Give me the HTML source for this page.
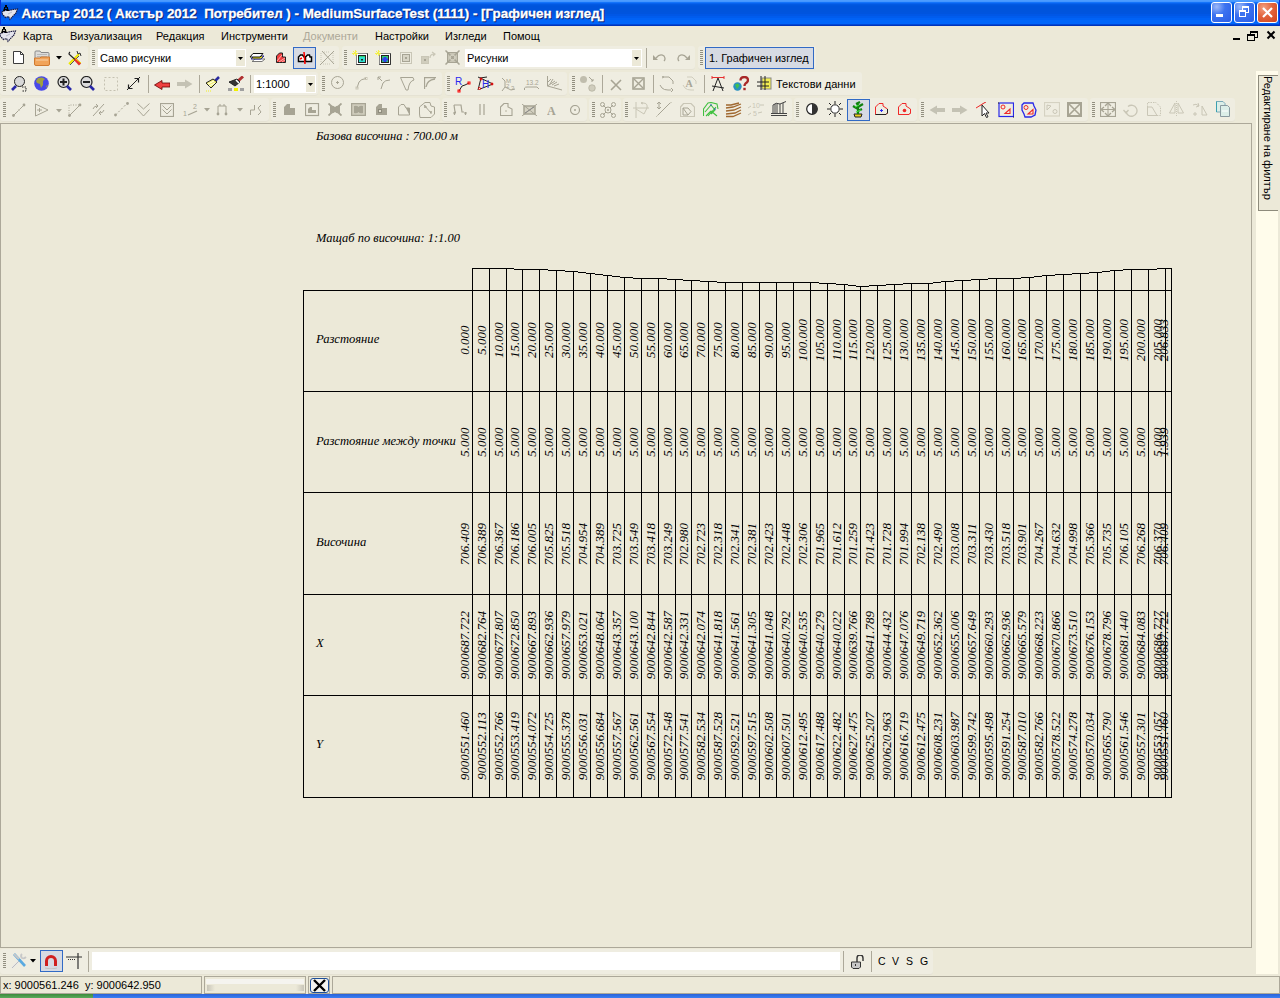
<!DOCTYPE html><html><head><meta charset="utf-8"><style>
*{box-sizing:border-box}
body{margin:0;width:1280px;height:998px;position:relative;overflow:hidden;background:#ECE9D8;font-family:"Liberation Sans",sans-serif;}
.a{position:absolute}
.t{position:absolute;white-space:nowrap;line-height:1}
.tb{position:absolute;background:#EFEDE1;border-radius:3px;box-shadow:inset 0 -1px 0 #E5E2D3}
.grip{position:absolute;width:3px;background:repeating-linear-gradient(to bottom,#928F80 0 1px,transparent 1px 2px)}
.sep{position:absolute;width:1px;background:#ACA899}
.mn{position:absolute;font-size:11px;color:#000;line-height:1}
</style></head><body>

<div class="a" style="left:0;top:0;width:1280px;height:26px;background:linear-gradient(to bottom,#4C9CFF 0px 1px,#4596FF 1px 2px,#1474FA 2px 3px,#0862EE 3px 4px,#0259E2 4px 5px,#0056DE 5px 6px,#0054DC 6px 12px,#0054DE 12px 14px,#0057E6 14px 16px,#005CEE 16px 18px,#0062F6 18px 20px,#0066FA 20px 23px,#0066FB 23px 24px,#0048D6 24px 25px,#0034BA 25px 26px)"></div>
<div class="a" style="left:0;top:0;width:1px;height:26px;background:#0831D9"></div>
<div class="a" style="left:1279px;top:0;width:1px;height:26px;background:#0831D9"></div>

<div class="t" style="left:22.5px;top:8px;font-weight:bold;font-size:13.4px;color:#0A1E6E;-webkit-text-stroke:0.3px #0A1E6E;">Акстър 2012 ( Акстър 2012&nbsp; Потребител ) - MediumSurfaceTest (1111) - [Графичен изглед]</div>
<div class="t" style="left:21.5px;top:7px;font-weight:bold;font-size:13.4px;color:#FFFFFF;-webkit-text-stroke:0.3px #FFFFFF;">Акстър 2012 ( Акстър 2012&nbsp; Потребител ) - MediumSurfaceTest (1111) - [Графичен изглед]</div>
<svg class="a" style="left:0px;top:0px" width="20" height="22" viewBox="0 0 20 22">
<path d="M2 12 L5 10.5 L9 10.5 L13 9.5 L17.5 9 L16 13 L13 16 L10 19.5 L8.5 16.5 L5.5 17.5 L2.5 14.5 Z" fill="#E4E4EC" stroke="#1A1A40" stroke-width="1.1" stroke-dasharray="1.6 0.6"/>
<path d="M8 14 L12 12" stroke="#B8B8C8"/>
<path fill-rule="evenodd" d="M5 5 H7 V7 H8 V8 L9 11 H7 V10 H5 V11 H3 L4 8 V7 H5 Z M5.2 7.8 V9 H6.8 V7.8 Z" fill="#000"/></svg>
<div class="a" style="left:1211px;top:2px;width:21px;height:21px;border:1px solid #FFFFFF;border-radius:3px;background:radial-gradient(circle at 25% 20%,#9DB9F8 0,#3C73F0 40%,#2A5DE6 100%)"></div><div class="a" style="left:1216px;top:14px;width:7px;height:3px;background:#fff"></div>
<div class="a" style="left:1234px;top:2px;width:21px;height:21px;border:1px solid #FFFFFF;border-radius:3px;background:radial-gradient(circle at 25% 20%,#9DB9F8 0,#3C73F0 40%,#2A5DE6 100%)"></div><div class="a" style="left:1242px;top:6px;width:7px;height:7px;border:1px solid #fff;border-top-width:2px"></div><div class="a" style="left:1239px;top:10px;width:7px;height:7px;border:1px solid #fff;border-top-width:2px;background:#3C73F0"></div>
<div class="a" style="left:1257px;top:2px;width:21px;height:21px;border:1px solid #FFFFFF;border-radius:3px;background:radial-gradient(circle at 30% 25%,#F4A080 0,#E2643C 45%,#D0441E 100%)"></div><svg class="a" style="left:1257px;top:2px" width="21" height="21"><path d="M6 6 L15 15 M15 6 L6 15" stroke="#fff" stroke-width="2.2"/></svg>
<svg class="a" style="left:-2px;top:22px" width="20" height="22" viewBox="0 0 20 22">
<path d="M2 12 L5 10.5 L9 10.5 L13 9.5 L17.5 9 L16 13 L13 16 L10 19.5 L8.5 16.5 L5.5 17.5 L2.5 14.5 Z" fill="#E4E4EC" stroke="#1A1A40" stroke-width="1.1" stroke-dasharray="1.6 0.6"/>
<path d="M8 14 L12 12" stroke="#B8B8C8"/>
<path fill-rule="evenodd" d="M5 5 H7 V7 H8 V8 L9 11 H7 V10 H5 V11 H3 L4 8 V7 H5 Z M5.2 7.8 V9 H6.8 V7.8 Z" fill="#000"/></svg>
<div class="mn" style="left:23px;top:31px;color:#000">Карта</div>
<div class="mn" style="left:70px;top:31px;color:#000">Визуализация</div>
<div class="mn" style="left:156px;top:31px;color:#000">Редакция</div>
<div class="mn" style="left:221px;top:31px;color:#000">Инструменти</div>
<div class="mn" style="left:303px;top:31px;color:#ACA899">Документи</div>
<div class="mn" style="left:375px;top:31px;color:#000">Настройки</div>
<div class="mn" style="left:445px;top:31px;color:#000">Изгледи</div>
<div class="mn" style="left:503px;top:31px;color:#000">Помощ</div>
<div class="a" style="left:1233px;top:38px;width:7px;height:2px;background:#000"></div>
<div class="a" style="left:1250px;top:31px;width:8px;height:7px;border:1px solid #000;border-top-width:2px"></div>
<div class="a" style="left:1247px;top:34px;width:8px;height:7px;border:1px solid #000;border-top-width:2px;background:#ECE9D8"></div>
<svg class="a" style="left:1266px;top:30px" width="10" height="10"><path d="M1.5 1.5 L8.5 8.5 M8.5 1.5 L1.5 8.5" stroke="#000" stroke-width="2"/></svg>
<div class="tb" style="left:0px;top:46px;width:88px;height:24px"></div>
<div class="grip" style="left:3px;top:50px;height:15px"></div>
<div class="tb" style="left:90px;top:46px;width:249px;height:24px"></div>
<div class="grip" style="left:92px;top:50px;height:15px"></div>
<div class="tb" style="left:342px;top:46px;width:353px;height:24px"></div>
<div class="grip" style="left:344px;top:50px;height:15px"></div>
<div class="tb" style="left:698px;top:46px;width:118px;height:24px"></div>
<div class="grip" style="left:700px;top:50px;height:15px"></div>
<div class="tb" style="left:0px;top:72px;width:318px;height:24px"></div>
<div class="grip" style="left:3px;top:76px;height:15px"></div>
<div class="tb" style="left:320px;top:72px;width:122px;height:24px"></div>
<div class="grip" style="left:322px;top:76px;height:15px"></div>
<div class="tb" style="left:445px;top:72px;width:122px;height:24px"></div>
<div class="grip" style="left:447px;top:76px;height:15px"></div>
<div class="tb" style="left:569px;top:72px;width:293px;height:24px"></div>
<div class="grip" style="left:572px;top:76px;height:15px"></div>
<div class="tb" style="left:0px;top:98px;width:269px;height:24px"></div>
<div class="grip" style="left:3px;top:102px;height:15px"></div>
<div class="tb" style="left:271px;top:98px;width:169px;height:24px"></div>
<div class="grip" style="left:273px;top:102px;height:15px"></div>
<div class="tb" style="left:442px;top:98px;width:145px;height:24px"></div>
<div class="grip" style="left:444px;top:102px;height:15px"></div>
<div class="tb" style="left:589px;top:98px;width:32px;height:24px"></div>
<div class="grip" style="left:592px;top:102px;height:15px"></div>
<div class="tb" style="left:623px;top:98px;width:169px;height:24px"></div>
<div class="grip" style="left:625px;top:102px;height:15px"></div>
<div class="tb" style="left:794px;top:98px;width:123px;height:24px"></div>
<div class="grip" style="left:796px;top:102px;height:15px"></div>
<div class="tb" style="left:919px;top:98px;width:169px;height:24px"></div>
<div class="grip" style="left:921px;top:102px;height:15px"></div>
<div class="tb" style="left:1090px;top:98px;width:145px;height:24px"></div>
<div class="grip" style="left:1092px;top:102px;height:15px"></div>
<div class="a" style="left:98px;top:49px;width:148px;height:18px;background:#fff"></div>
<div class="a" style="left:236px;top:50px;width:9px;height:16px;background:#ECE9D8"></div>
<svg class="a" style="left:238px;top:57px" width="5" height="3"><path d="M0 0 H5 L2.5 3 Z" fill="#000"/></svg>
<div class="mn" style="left:100px;top:53px">Само рисунки</div>
<div class="a" style="left:465px;top:49px;width:177px;height:18px;background:#fff"></div>
<div class="a" style="left:632px;top:50px;width:9px;height:16px;background:#ECE9D8"></div>
<svg class="a" style="left:634px;top:57px" width="5" height="3"><path d="M0 0 H5 L2.5 3 Z" fill="#000"/></svg>
<div class="mn" style="left:467px;top:53px">Рисунки</div>
<div class="sep" style="left:646px;top:48px;height:20px"></div>
<div class="a" style="left:254px;top:75px;width:62px;height:18px;background:#fff"></div>
<div class="a" style="left:306px;top:76px;width:9px;height:16px;background:#ECE9D8"></div>
<svg class="a" style="left:308px;top:83px" width="5" height="3"><path d="M0 0 H5 L2.5 3 Z" fill="#000"/></svg>
<div class="mn" style="left:256px;top:79px">1:1000</div>
<div class="sep" style="left:148px;top:75px;height:18px"></div>
<div class="sep" style="left:199px;top:75px;height:18px"></div>
<div class="sep" style="left:250px;top:75px;height:18px"></div>
<div class="sep" style="left:602px;top:75px;height:18px"></div>
<div class="sep" style="left:653px;top:75px;height:18px"></div>
<div class="sep" style="left:704px;top:75px;height:18px"></div>
<div class="a" style="left:705px;top:47px;width:109px;height:22px;background:#D6DAE3;border:1px solid #316AC5"></div>
<div class="mn" style="left:709px;top:53px">1. Графичен изглед</div>
<div class="mn" style="left:776px;top:79px">Текстови данни</div>
<div class="a" style="left:293px;top:47px;width:23px;height:22px;background:#D6DAE3;border:1px solid #316AC5"></div>
<div class="a" style="left:847px;top:99px;width:23px;height:22px;background:#D6DAE3;border:1px solid #316AC5"></div>
<div class="a" style="left:0;top:123px;width:1252px;height:825px;border-top:1px solid #ACA899;border-left:1px solid #ACA899;border-right:1px solid #ACA899;border-bottom:1px solid #ACA899"></div>
<div class="a" style="left:1256px;top:71px;width:22px;height:903px;background:#FFFCEB"></div>
<div class="a" style="left:1258px;top:75px;width:20px;height:136px;border-left:1px solid #8E8B7C;border-top:1px solid #8E8B7C;border-bottom:1px solid #8E8B7C;background:#ECE9D8"></div>
<div class="t" style="left:1273px;top:76px;font-size:11px;transform-origin:0 0;transform:rotate(90deg)">Редактиране на филтър</div>
<div class="tb" style="left:0px;top:949px;width:933px;height:26px"></div>
<div class="grip" style="left:3px;top:953px;height:15px"></div>
<div class="a" style="left:40px;top:950px;width:23px;height:22px;background:#D6DAE3;border:1px solid #316AC5"></div>
<div class="sep" style="left:88px;top:951px;height:21px"></div>
<div class="a" style="left:92px;top:952px;width:748px;height:18px;background:#fff"></div>
<div class="sep" style="left:843px;top:951px;height:21px"></div>
<div class="sep" style="left:871px;top:951px;height:21px"></div>
<div class="mn" style="left:878px;top:956px;font-size:10.5px">C</div>
<div class="mn" style="left:892px;top:956px;font-size:10.5px">V</div>
<div class="mn" style="left:906px;top:956px;font-size:10.5px">S</div>
<div class="mn" style="left:920px;top:956px;font-size:10.5px">G</div>
<div class="a" style="left:0;top:976px;width:1280px;height:18px;background:#ECE9D8"></div>
<div class="a" style="left:0px;top:976px;width:202px;height:18px;border:1px solid #ACA899;border-right-color:#ACA899"></div>
<div class="a" style="left:204px;top:976px;width:102px;height:18px;border:1px solid #ACA899;border-right-color:#ACA899"></div>
<div class="a" style="left:308px;top:976px;width:22px;height:18px;border:1px solid #ACA899;border-right-color:#ACA899"></div>
<div class="a" style="left:332px;top:976px;width:948px;height:18px;border:1px solid #ACA899;border-right-color:#ACA899"></div>
<div class="mn" style="left:3px;top:980px">x: 9000561.246&nbsp; y: 9000642.950</div>
<div class="a" style="left:206px;top:979px;width:98px;height:5px;background:#F5F4EF"></div>
<div class="a" style="left:207px;top:985px;width:8px;height:6px;background:linear-gradient(to right,#C8C5B8,#ECE9D8)"></div>
<div class="a" style="left:296px;top:985px;width:8px;height:6px;background:linear-gradient(to left,#C8C5B8,#ECE9D8)"></div>
<div class="a" style="left:310px;top:978px;width:19px;height:15px;border:1px solid #1C4E9A;border-radius:3px;background:#F4F3EE"></div>
<svg class="a" style="left:312px;top:979px" width="15" height="13"><path d="M2 1 L13 12 M13 1 L2 12" stroke="#000" stroke-width="2.4"/></svg>
<div class="a" style="left:0;top:994px;width:1280px;height:4px;background:linear-gradient(#2B62D8,#3A80F3)"></div>
<div class="a" style="left:0;top:994px;width:93px;height:4px;background:linear-gradient(#3C8A3C,#5BAA5B)"></div>
<svg class="a" style="left:12px;top:50px" width="13" height="15" viewBox="0 0 13 15"><path d="M1.5 1.5 H8.5 L11.5 4.5 V13.5 H1.5 Z" fill="#fff" stroke="#3C3C3C"/><path d="M8.5 1.5 V4.5 H11.5" fill="none" stroke="#3C3C3C"/></svg>
<svg class="a" style="left:34px;top:50px" width="16" height="16" viewBox="0 0 16 16"><path d="M1 2 Q1 1 2 1 H6 L7 2.5 H14 Q15 2.5 15 3.5 V9 H1 Z" fill="#DCDCDA" stroke="#8A8A8A"/><path d="M3 4.5 H13 M3 6.5 H13" stroke="#B8B8B8"/><path d="M0.5 8 H6 L7 7 H15.5 V14 Q15.5 15.5 14 15.5 H2 Q0.5 15.5 0.5 14 Z" fill="#F1A45A" stroke="#D07A30"/><path d="M2 10 H14" stroke="#F8D2A8"/></svg>
<svg class="a" style="left:56px;top:56px" width="6" height="4" viewBox="0 0 6 4"><path d="M0 0 H6 L3 3.5 Z" fill="#000"/></svg>
<svg class="a" style="left:67px;top:50px" width="16" height="16" viewBox="0 0 16 16"><path d="M2 14 L12 4" stroke="#EEE800" stroke-width="2"/><path d="M3 15 L12 6" stroke="#555" stroke-width="1"/><path d="M3 2 Q1 4 3 5 L13 14" stroke="#222" fill="none" stroke-width="1.2"/><path d="M8 9 L13 14.5" stroke="#E8302A" stroke-width="3"/><path d="M9 9 L14 13" stroke="#F0E000" stroke-width="1"/><path d="M10 1 L11 4 L13 3 L14 6" stroke="#333" fill="none"/></svg>
<svg class="a" style="left:249px;top:52px" width="17" height="11" viewBox="0 0 17 11"><path d="M3 9.5 L13 9.5 L16 7 L6 7 Z" fill="#fff" stroke="#777"/><path d="M2 7 L12 7 L15 4 L5 4 Z" fill="#E8E000" stroke="#2020A0"/><path d="M1 5 L11 5 L14 1.5 L4 1.5 Z" fill="#fff" stroke="#111"/></svg>
<svg class="a" style="left:275px;top:52px" width="12" height="12" viewBox="0 0 12 12"><path d="M1.5 4 L4.5 1 H7.5 V5 H10.5 V10.5 H1.5 Z" fill="#F04040" stroke="#222"/><path d="M2 9 L7 3 M4 10 L10 6 M7 10 L10 8" stroke="#FFB0B0"/></svg>
<svg class="a" style="left:297px;top:51px" width="16" height="13" viewBox="0 0 16 13"><path d="M1.5 10.5 V6 L3.5 4 H5.5 L7 6 H8 V10.5 Z" fill="#fff" stroke="#000" stroke-width="1.5"/><path d="M3 8 L5 7" stroke="#f00" stroke-width="1.5"/><path d="M8.5 10.5 V6 L10.5 4 H12.5 L13 6 H14.5 V10.5 Z" fill="#fff" stroke="#000" stroke-width="1.5"/><path d="M7 1 L8 13" stroke="#f00" stroke-width="1.5"/></svg>
<svg class="a" style="left:319px;top:50px" width="16" height="16" viewBox="0 0 16 16"><path d="M1 15 L15 1 M3 1 L15 14" stroke="#A7A494"/><path d="M2 3 V13 M14 3 V13 M4 14 H12 M5 2 H11" stroke="#C9C6B6" stroke-dasharray="1 1"/></svg>
<svg class="a" style="left:352px;top:50px" width="16" height="16" viewBox="0 0 16 16"><rect x="4.5" y="3.5" width="11" height="11" fill="#fff" stroke="#888"/><path d="M15.5 3.5 V14.5 H4.5" fill="none" stroke="#333"/><rect x="6.5" y="5.5" width="7" height="7" fill="#30D070" stroke="#222"/><rect x="7" y="7" width="6" height="5" fill="#30E0D0"/><rect x="9" y="9" width="2" height="1.5" fill="#222"/><path d="M1 1 L5 5 M3.5 0 V6 M0 3.5 H6 M5 1 L1 5" stroke="#F4F040" stroke-width="0.9"/></svg>
<svg class="a" style="left:375px;top:50px" width="16" height="16" viewBox="0 0 16 16"><rect x="4.5" y="3.5" width="11" height="11" fill="#fff" stroke="#888"/><path d="M15.5 3.5 V14.5 H4.5" fill="none" stroke="#333"/><rect x="6.5" y="5.5" width="7" height="7" fill="#30D070" stroke="#222"/><rect x="7" y="7" width="6" height="5" fill="#3040F0"/><path d="M7 7 h1.5 v1.5 h-1.5z M11.5 7 h1.5 v1.5 h-1.5z M7 10.5 h1.5 v1.5 h-1.5z M11.5 10.5 h1.5 v1.5 h-1.5z" fill="#30D070"/><path d="M1 1 L5 5 M3.5 0 V6 M0 3.5 H6 M5 1 L1 5" stroke="#F4F040" stroke-width="0.9"/></svg>
<svg class="a" style="left:400px;top:52px" width="12" height="12" viewBox="0 0 12 12"><rect x="0.5" y="0.5" width="11" height="11" fill="none" stroke="#C9C6B6"/><rect x="2.5" y="2.5" width="7" height="7" fill="#D8D5C6" stroke="#A7A494"/><rect x="5" y="5" width="2" height="2" fill="#A7A494"/></svg>
<svg class="a" style="left:421px;top:51px" width="16" height="14" viewBox="0 0 16 14"><rect x="0.5" y="5.5" width="7" height="7" fill="#D0CDBD" stroke="#C9C6B6"/><rect x="3" y="8" width="2" height="2" fill="#A7A494"/><path d="M9 7 Q9 3 13 3 M11 1 L14 3 L12 5" stroke="#C9C6B6" fill="none" stroke-width="1.2"/></svg>
<svg class="a" style="left:445px;top:50px" width="15" height="15" viewBox="0 0 15 15"><rect x="2.5" y="2.5" width="10" height="10" fill="#C8C5B5" stroke="#A7A494"/><path d="M0.5 0.5 L14.5 14.5 M14.5 0.5 L0.5 14.5" stroke="#A7A494" stroke-width="1.5"/><circle cx="7.5" cy="7.5" r="2.5" fill="none" stroke="#D8D5C6"/></svg>
<svg class="a" style="left:653px;top:53px" width="14" height="9" viewBox="0 0 14 9"><g ><path d="M3 5 Q7 0 11 3 Q13 6 11 8" fill="none" stroke="#A7A494" stroke-width="1.3"/><path d="M0 2 L0 7 L5 7 Z" fill="#A7A494"/></g></svg>
<svg class="a" style="left:676px;top:53px" width="14" height="9" viewBox="0 0 14 9"><g transform="translate(14,0) scale(-1,1)"><path d="M3 5 Q7 0 11 3 Q13 6 11 8" fill="none" stroke="#A7A494" stroke-width="1.3"/><path d="M0 2 L0 7 L5 7 Z" fill="#A7A494"/></g></svg>
<svg class="a" style="left:11px;top:76px" width="16" height="16" viewBox="0 0 16 16"><circle cx="8.5" cy="5.5" r="5" fill="#D8D8D8" stroke="#222"/><path d="M5 10 L1 14" stroke="#2828A8" stroke-width="2.6"/><path d="M11 11 H15 V15 H11" fill="none" stroke="#222" stroke-dasharray="1.5 1"/></svg>
<svg class="a" style="left:34px;top:76px" width="15" height="15" viewBox="0 0 15 15"><circle cx="7.5" cy="7.5" r="7.3" fill="#4848E8"/><path d="M4 2 L8 1.5 L11 3 L9 5 L9 9 L7 12 L6 8 L3 7 L2 5 Z M12 10 L14 9 L13 12 Z" fill="#A0A040"/></svg>
<svg class="a" style="left:57px;top:76px" width="16" height="16" viewBox="0 0 16 16"><circle cx="6.5" cy="6" r="5.5" fill="#DCDCDC" stroke="#222" stroke-width="1.2"/><path d="M3 6 H10 M6.5 2.5 V9.5" stroke="#222" stroke-width="2"/><path d="M10 10 L14 14" stroke="#2828A8" stroke-width="2.6"/></svg>
<svg class="a" style="left:80px;top:76px" width="16" height="16" viewBox="0 0 16 16"><circle cx="6.5" cy="6" r="5.5" fill="#DCDCDC" stroke="#222" stroke-width="1.2"/><path d="M3 6 H10" stroke="#222" stroke-width="2"/><path d="M10 10 L14 14" stroke="#2828A8" stroke-width="2.6"/></svg>
<svg class="a" style="left:104px;top:77px" width="14" height="14" viewBox="0 0 14 14"><rect x="0.5" y="0.5" width="13" height="13" fill="none" stroke="#C4C1B1" stroke-dasharray="2 2"/></svg>
<svg class="a" style="left:126px;top:76px" width="15" height="15" viewBox="0 0 15 15"><path d="M1 14 L14 1" stroke="#222"/><path d="M8.5 2.5 L12.5 2.5 L12.5 6.5 M2.5 8.5 V12.5 H6.5" fill="none" stroke="#222" stroke-width="1.2"/></svg>
<svg class="a" style="left:154px;top:80px" width="16" height="10" viewBox="0 0 16 10"><path d="M0.5 5 L8 0.5 V3 H16 V7 H8 V9.5 Z" fill="#F04040" stroke="#600" stroke-width="0.8"/></svg>
<svg class="a" style="left:177px;top:79px" width="16" height="10" viewBox="0 0 16 10"><path d="M15.5 5 L8 0.5 V3 H0 V7 H8 V9.5 Z" fill="#C4C2B4"/></svg>
<svg class="a" style="left:205px;top:76px" width="16" height="16" viewBox="0 0 16 16"><path d="M10 5 L14 1" stroke="#2A2AA0" stroke-width="2.5"/><path d="M1 7 L8 3 L12 6 L6 12 Z" fill="#F2F070" stroke="#222"/><path d="M3 8 L9 5 M4 10 L10 7" stroke="#fff"/><path d="M1 15 H6" stroke="#F0F020" stroke-dasharray="1 1"/></svg>
<svg class="a" style="left:228px;top:76px" width="16" height="16" viewBox="0 0 16 16"><path d="M10 5 L15 0.5" stroke="#B03030" stroke-width="3"/><path d="M1 6 L9 3 L12 6 L7 10 Z" fill="#333" stroke="#222"/><path d="M8 4 L11 7" stroke="#fff" stroke-width="1.5"/><rect x="0" y="12" width="4" height="3" fill="#A0A0A0"/><rect x="6" y="12" width="4" height="3" fill="#F0F000"/><rect x="12" y="12" width="4" height="3" fill="#A0A0A0"/></svg>
<svg class="a" style="left:331px;top:76px" width="13" height="13" viewBox="0 0 13 13"><circle cx="6.5" cy="6.5" r="6" fill="none" stroke="#A7A494"/><path d="M6.5 5 V8 M5 6.5 H8" stroke="#A7A494"/></svg>
<svg class="a" style="left:355px;top:77px" width="13" height="13" viewBox="0 0 13 13"><path d="M2 11 L4 5 Q6 2 11 1.5" fill="none" stroke="#A7A494"/><rect x="1" y="10" width="2" height="2" fill="none" stroke="#C9C6B6"/><rect x="10" y="0.5" width="2" height="2" fill="none" stroke="#C9C6B6"/></svg>
<svg class="a" style="left:377px;top:76px" width="15" height="14" viewBox="0 0 15 14"><path d="M4 13 L6 7 Q8 4 13 4" fill="none" stroke="#A7A494"/><path d="M1 1 L5 5 M1 1 V4 M1 1 H4" stroke="#A7A494"/></svg>
<svg class="a" style="left:400px;top:77px" width="15" height="14" viewBox="0 0 15 14"><path d="M0.5 0.5 H13 L14 3 Q9 4 8 13 L6 13 Z" fill="none" stroke="#A7A494"/></svg>
<svg class="a" style="left:424px;top:77px" width="13" height="13" viewBox="0 0 13 13"><path d="M0.5 12 V0.5 H12 M2 10 Q3 3 11 2" fill="none" stroke="#A7A494" stroke-width="1.3"/></svg>
<svg class="a" style="left:455px;top:77px" width="16" height="16" viewBox="0 0 16 16"><text x="0" y="8" font-family="Liberation Sans" font-size="10" fill="#2828F0">R</text><path d="M4 14 L7 9 L10 8 L14 6" fill="none" stroke="#222"/><rect x="3" y="13" width="2" height="2" fill="none" stroke="#f00"/><rect x="13" y="5" width="2" height="2" fill="none" stroke="#f00"/></svg>
<svg class="a" style="left:477px;top:76px" width="17" height="16" viewBox="0 0 17 16"><path d="M4 2 L1 14 M1 1 L16 8 L3 13 M3 2 L10 1" fill="none" stroke="#222"/><text x="5" y="12" font-family="Liberation Sans" font-size="10" fill="#2828F0">H</text><circle cx="4" cy="3" r="1" fill="none" stroke="#f00"/><circle cx="2.5" cy="12.5" r="1" fill="none" stroke="#f00"/><circle cx="15" cy="8" r="1" fill="none" stroke="#f00"/></svg>
<svg class="a" style="left:501px;top:77px" width="16" height="15" viewBox="0 0 16 15"><path d="M1 1 L4 4 V10 L1 14 M4 10 L10 13 L14 12" fill="none" stroke="#A7A494"/><text x="5" y="6" font-family="Liberation Sans" font-size="6" fill="#A7A494">M</text><text x="5" y="11" font-family="Liberation Sans" font-size="6" fill="#A7A494">2</text><text x="10" y="13" font-family="Liberation Sans" font-size="6" fill="#A7A494">3</text></svg>
<svg class="a" style="left:524px;top:79px" width="16" height="12" viewBox="0 0 16 12"><text x="2" y="6" font-family="Liberation Sans" font-size="6.5" fill="#A7A494">13.2</text><path d="M0.5 11 V9 Q1 8 3 8 H13 L15 10" fill="none" stroke="#A7A494"/></svg>
<svg class="a" style="left:547px;top:76px" width="16" height="15" viewBox="0 0 16 15"><path d="M0.5 0 V10 L15 14 M0.5 10 L8 5 M3 8 L6 3 M5 9 L10 6 M7 10 L12 8 M1 6 L4 3" fill="none" stroke="#A7A494"/></svg>
<svg class="a" style="left:580px;top:76px" width="16" height="16" viewBox="0 0 16 16"><circle cx="3.5" cy="3.5" r="3.5" fill="#C0BDAD"/><circle cx="12" cy="12" r="3.3" fill="#D0CDBD" stroke="#A7A494" stroke-width="0.6"/><path d="M9 1 L13 5 M11 5 H13 V3" stroke="#A7A494" fill="none"/></svg>
<svg class="a" style="left:610px;top:79px" width="12" height="12" viewBox="0 0 12 12"><path d="M1 1 L11 11 M11 1 L1 11" stroke="#A7A494" stroke-width="1.6"/></svg>
<svg class="a" style="left:632px;top:77px" width="13" height="13" viewBox="0 0 13 13"><rect x="1" y="1" width="11" height="11" fill="none" stroke="#A7A494" stroke-width="1.6"/><path d="M2 2 L11 11 M11 2 L2 11" stroke="#A7A494" stroke-width="1.4"/></svg>
<svg class="a" style="left:659px;top:76px" width="16" height="16" viewBox="0 0 16 16"><path d="M5 1 H10 L14 5 V8 M1 9 L3 12 Q5 14 9 14 H12 M12 12 L14 14 L12 16 M3 0 L5 1 L3 2" fill="none" stroke="#A7A494"/></svg>
<svg class="a" style="left:682px;top:76px" width="16" height="16" viewBox="0 0 16 16"><path d="M5 1 H10 L14 5 V8 M1 9 L3 12 Q5 14 9 14 H12" fill="none" stroke="#D0CDBD"/><text x="3.5" y="11" font-family="Liberation Serif" font-weight="bold" font-size="10" fill="#A7A494">A</text></svg>
<svg class="a" style="left:711px;top:76px" width="14" height="16" viewBox="0 0 14 16"><path d="M1 1.5 H13 M1 0 V3 M13 0 V3" stroke="#E83030"/><path d="M7 2 L2 15 M7 2 L12 15 M1 10 L13 12" fill="none" stroke="#222"/></svg>
<svg class="a" style="left:733px;top:76px" width="16" height="15" viewBox="0 0 16 15"><circle cx="4.5" cy="10.5" r="4.2" fill="#2890C0"/><path d="M2 8.5 L5 7.5 L6.5 9.5 L4 13 Z" fill="#40C050"/><path d="M7.5 4.5 Q7.5 1 11.5 1 Q15 1 15 4 Q15 6 12.5 7.5 Q11.5 8.5 11.5 10" fill="none" stroke="#A82828" stroke-width="2.3"/><rect x="10.3" y="11.8" width="2.4" height="2.4" fill="#A82828"/></svg>
<svg class="a" style="left:757px;top:76px" width="15" height="15" viewBox="0 0 15 15"><rect x="5" y="2" width="9" height="11" fill="#F2EE50" stroke="#888"/><path d="M0 6 H12 M0 10 H12 M4 0 V14 M8 0 V14" stroke="#222"/></svg>
<svg class="a" style="left:12px;top:103px" width="14" height="14" viewBox="0 0 14 14"><path d="M1.5 12.5 L12.5 1.5" stroke="#A7A494"/><circle cx="1.5" cy="12.5" r="1.4" fill="#A7A494"/><circle cx="12" cy="2" r="1.4" fill="#A7A494"/><circle cx="7" cy="7" r="1" fill="#C9C6B6"/></svg>
<svg class="a" style="left:35px;top:103px" width="14" height="14" viewBox="0 0 14 14"><path d="M0.5 1 L13 7 L0.5 13 Z M2 7 H7 M4.5 5 V9" fill="none" stroke="#A7A494"/></svg>
<svg class="a" style="left:56px;top:109px" width="6" height="4" viewBox="0 0 6 4"><path d="M0 0 H6 L3 3.5 Z" fill="#A7A494"/></svg>
<svg class="a" style="left:68px;top:103px" width="14" height="14" viewBox="0 0 14 14"><path d="M1 13 L13 1" stroke="#A7A494"/><path d="M1 13 V2 H13" stroke="#A7A494" stroke-dasharray="1 1.5" fill="none"/><circle cx="1.5" cy="12.5" r="1.4" fill="#A7A494"/><circle cx="12" cy="2" r="1.4" fill="#A7A494"/></svg>
<svg class="a" style="left:92px;top:103px" width="13" height="14" viewBox="0 0 13 14"><path d="M1 13 L12 1" stroke="#A7A494"/><path d="M1 6 Q2 3 5 3 M4 1 L6 3 L4 5 M12 7 Q11 10 8 10 M9 8 L7 10 L9 12" fill="none" stroke="#A7A494"/></svg>
<svg class="a" style="left:114px;top:102px" width="15" height="15" viewBox="0 0 15 15"><path d="M1.5 13 L13 1.5" stroke="#A7A494" stroke-dasharray="2 2"/><circle cx="1.5" cy="13" r="1.4" fill="#A7A494"/><circle cx="13.5" cy="1.5" r="1.4" fill="#A7A494"/></svg>
<svg class="a" style="left:137px;top:103px" width="13" height="14" viewBox="0 0 13 14"><path d="M0.5 0.5 L6.5 6 L12.5 0.5 M0.5 6.5 L6.5 13 L12.5 6.5" fill="none" stroke="#A7A494"/></svg>
<svg class="a" style="left:160px;top:103px" width="14" height="14" viewBox="0 0 14 14"><rect x="0.5" y="0.5" width="13" height="13" fill="none" stroke="#A7A494" stroke-width="1.2"/><path d="M2.5 2.5 L7 7 L11.5 2.5 M2.5 6.5 L7 11 L11.5 6.5" fill="none" stroke="#A7A494"/></svg>
<svg class="a" style="left:183px;top:103px" width="15" height="14" viewBox="0 0 15 14"><text x="0" y="13" font-family="Liberation Sans" font-size="7" fill="#A7A494">1</text><text x="10" y="6" font-family="Liberation Sans" font-size="7" fill="#A7A494">2</text><path d="M5 12 L14 8" stroke="#A7A494" stroke-width="1.2"/></svg>
<svg class="a" style="left:204px;top:108px" width="6" height="4" viewBox="0 0 6 4"><path d="M0 0 H6 L3 3.5 Z" fill="#A7A494"/></svg>
<svg class="a" style="left:216px;top:104px" width="13" height="12" viewBox="0 0 13 12"><path d="M2 10 V2 H10 V10 M4 2 V0 M8 2 V0" fill="none" stroke="#A7A494"/><circle cx="2" cy="10" r="1.4" fill="#A7A494"/><circle cx="10" cy="10" r="1.4" fill="#A7A494"/></svg>
<svg class="a" style="left:237px;top:108px" width="6" height="4" viewBox="0 0 6 4"><path d="M0 0 H6 L3 3.5 Z" fill="#A7A494"/></svg>
<svg class="a" style="left:250px;top:105px" width="13" height="11" viewBox="0 0 13 11"><path d="M0.5 10 V5 H4.5 V0 M11 0 L8 3 L11 7 L8 10" fill="none" stroke="#A7A494"/></svg>
<svg class="a" style="left:284px;top:104px" width="12" height="12" viewBox="0 0 12 12"><path d="M0 3 L3 0 H6 V4 H11 V11 H0 Z" fill="#A7A494"/></svg>
<svg class="a" style="left:305px;top:103px" width="15" height="14" viewBox="0 0 15 14"><rect x="0.5" y="0.5" width="13" height="12" fill="none" stroke="#A7A494" stroke-width="1.2"/><path d="M3 6 L5 4 H7 V7 H11 V10 H3 Z" fill="#A7A494"/></svg>
<svg class="a" style="left:328px;top:103px" width="14" height="13" viewBox="0 0 14 13"><path d="M2 3 Q5 2 7 4 Q9 2 12 3 V10 Q9 11 7 9 Q5 11 2 10 Z" fill="#A7A494"/><path d="M0.5 0.5 L13.5 12.5 M13.5 0.5 L0.5 12.5" stroke="#A7A494" stroke-width="1.8"/></svg>
<svg class="a" style="left:351px;top:103px" width="15" height="13" viewBox="0 0 15 13"><rect x="0.5" y="0.5" width="14" height="12" fill="#D0CDBD" stroke="#A7A494" stroke-width="1.5"/><path d="M3 3 Q6 2 7.5 4 Q9 2 12 3 V10 Q9 11 7.5 9 Q6 11 3 10 Z" fill="#A7A494"/></svg>
<svg class="a" style="left:376px;top:104px" width="12" height="12" viewBox="0 0 12 12"><path d="M0 3 L3 0 H6 V4 H11 V11 H0 Z" fill="#A7A494"/><rect x="2.5" y="5.5" width="3" height="3" fill="#E0DDCD" stroke="#8E8B7C"/></svg>
<svg class="a" style="left:398px;top:104px" width="12" height="12" viewBox="0 0 12 12"><path d="M0.5 3 L3 0.5 H6 L8 4 H11.5 V11 H0.5 Z" fill="none" stroke="#A7A494"/><path d="M6 0.5 L11.5 11 V4 H8 Z" fill="#A7A494"/></svg>
<svg class="a" style="left:419px;top:102px" width="16" height="16" viewBox="0 0 16 16"><path d="M0.5 5 L6 0.5 H11 L12 4 L15.5 5 V12 L12 15.5 H1 L0.5 12 Z" fill="none" stroke="#A7A494"/><path d="M5 3 L12 11 M5 5 H8 M6 3 V6 M11 10 H13 M12 9 V12" stroke="#A7A494"/></svg>
<svg class="a" style="left:453px;top:104px" width="15" height="12" viewBox="0 0 15 12"><path d="M1 1 H8 L9 8 H11 M1 1 L2 8 H3 M0 9 H3 M1.5 8 V11 M11 9 H14 M12.5 8 V11" fill="none" stroke="#A7A494" stroke-width="1.2"/></svg>
<svg class="a" style="left:479px;top:104px" width="6" height="11" viewBox="0 0 6 11"><path d="M1 0 V11 M5 0 V11" stroke="#A7A494" stroke-width="1.2"/></svg>
<svg class="a" style="left:500px;top:103px" width="13" height="13" viewBox="0 0 13 13"><path d="M0.5 4 L4 0.5 H8 V4 L12 6 V12.5 H0.5 Z" fill="none" stroke="#A7A494" stroke-width="1.1"/><path d="M5 8 H7 M6 7 V9" stroke="#C9C6B6"/></svg>
<svg class="a" style="left:522px;top:104px" width="15" height="12" viewBox="0 0 15 12"><rect x="2" y="2" width="11" height="8" fill="#D5D2C2" stroke="#A7A494" stroke-width="1.5"/><path d="M0 0 L15 12 M15 0 L0 12" stroke="#A7A494"/><path d="M3 9 L12 3" stroke="#888"/></svg>
<svg class="a" style="left:547px;top:105px" width="10" height="10" viewBox="0 0 10 10"><text x="0" y="9.5" font-family="Liberation Serif" font-weight="bold" font-size="12" fill="#A7A494">A</text></svg>
<svg class="a" style="left:570px;top:105px" width="10" height="10" viewBox="0 0 10 10"><circle cx="5" cy="5" r="4.5" fill="none" stroke="#A7A494" stroke-width="1.2"/><circle cx="5" cy="5" r="1" fill="#A7A494"/></svg>
<svg class="a" style="left:600px;top:102px" width="16" height="16" viewBox="0 0 16 16"><circle cx="8" cy="8" r="3" fill="none" stroke="#A7A494"/><path d="M3 3 L6 6 M13 3 L10 6 M3 13 L6 10 M13 13 L10 10 M7 8 H9 M8 7 V9" stroke="#A7A494"/><circle cx="2.5" cy="2.5" r="2" fill="none" stroke="#A7A494"/><circle cx="13.5" cy="2.5" r="2" fill="none" stroke="#A7A494"/><circle cx="2.5" cy="13.5" r="2" fill="none" stroke="#A7A494"/><circle cx="13.5" cy="13.5" r="2" fill="none" stroke="#A7A494"/></svg>
<svg class="a" style="left:633px;top:102px" width="16" height="16" viewBox="0 0 16 16"><path d="M3 0 V16 M0 6 H16 M3 7 L11 12 L14 6 Q15 1 10 1 H8 M8 1 L10 0 M8 1 L10 2" fill="none" stroke="#C9C6B6"/></svg>
<svg class="a" style="left:656px;top:102px" width="16" height="15" viewBox="0 0 16 15"><path d="M3 0 V7 M1 2 L3 0 L5 2 M1 5 L3 7 L5 5 M2 13 L14 1" fill="none" stroke="#A7A494"/><path d="M2 13 L0 15 M14 1 L16 0" stroke="#C9C6B6"/></svg>
<svg class="a" style="left:680px;top:103px" width="15" height="14" viewBox="0 0 15 14"><path d="M0.5 4 L3.5 0.5 H11 L14.5 4 V13.5 H0.5 Z" fill="none" stroke="#C9C6B6" stroke-width="1.2"/><path d="M3 5 H8 L11 8.5 L8 12 H3 Z M3 5 L8 12" fill="none" stroke="#A7A494"/></svg>
<svg class="a" style="left:703px;top:102px" width="16" height="15" viewBox="0 0 16 15"><path d="M0.5 14 V7 L5 1 L8 0.5 L14 2 L15 7 M2 10 L8 3 L12 8 L8 12 M5 14 L13 5 M8 9 L14 14 M3 14 L8 9" fill="none" stroke="#40C040" stroke-width="1.1"/><circle cx="8" cy="3" r="0.8" fill="#2850C8"/><circle cx="12" cy="7" r="0.8" fill="#2850C8"/></svg>
<svg class="a" style="left:725px;top:102px" width="17" height="16" viewBox="0 0 17 16"><path d="M1 3 H6 L14 1 M1 6 L8 5 L16 2 M1 9 L9 8 L16 5 M1 12 L10 11 L16 8 M1 14.5 H8 L16 11" fill="none" stroke="#A06830" stroke-width="1.3"/></svg>
<svg class="a" style="left:748px;top:102px" width="16" height="15" viewBox="0 0 16 15"><text x="4" y="6" font-family="Liberation Sans" font-size="7" fill="#C9C6B6">10</text><text x="5" y="14" font-family="Liberation Sans" font-size="7" fill="#C9C6B6">5</text><path d="M0 6 L3 4 M12 3 H16 M0 13 L3 11 M10 11 L14 10" stroke="#C9C6B6"/></svg>
<svg class="a" style="left:771px;top:101px" width="16" height="16" viewBox="0 0 16 16"><path d="M0 12.5 H16 M0 14.5 H16" stroke="#444"/><path d="M2 12 V4 Q5 1 9 3 L15 0.5 M4 12 V3 M6 12 V2.5 M9 12 V3 M12 12 V2" fill="none" stroke="#444"/></svg>
<svg class="a" style="left:806px;top:103px" width="12" height="12" viewBox="0 0 12 12"><circle cx="6" cy="6" r="5.3" fill="#fff" stroke="#222" stroke-width="1.2"/><path d="M6 0.7 A5.3 5.3 0 0 1 6 11.3 Z" fill="#333"/></svg>
<svg class="a" style="left:827px;top:101px" width="16" height="16" viewBox="0 0 16 16"><circle cx="8" cy="8" r="4.2" fill="#fff" stroke="#222"/><path d="M8 0 V3 M8 13 V16 M0 8 H3 M13 8 H16 M2 2 L4 4 M12 12 L14 14 M14 2 L12 4 M2 14 L4 12" stroke="#222"/></svg>
<svg class="a" style="left:850px;top:101px" width="16" height="17" viewBox="0 0 16 17"><path d="M4 13 H12 L11 16 H5 Z" fill="#E8D020" stroke="#222"/><path d="M8 13 V3 M8 8 L3 5 M8 6 L13 3 M8 10 L12 8 M6 3 L10 1" stroke="#108010" stroke-width="2.2"/><path d="M5 6 L9 4 M6 11 L11 9" stroke="#40E040" stroke-width="1.2"/></svg>
<svg class="a" style="left:875px;top:103px" width="13" height="13" viewBox="0 0 13 13"><path d="M0.5 11.5 V4 L4 0.5 H8 V3 L12.5 6 V10 L11 11.5 Z" fill="none" stroke="#F02828"/><path d="M0.5 11.5 H11 L12.5 10 V6" fill="none" stroke="#222"/><path d="M5 7.5 H8 M6.5 6 V9" stroke="#2828F0"/></svg>
<svg class="a" style="left:898px;top:103px" width="13" height="13" viewBox="0 0 13 13"><path d="M0.5 11.5 V4 L4 0.5 H8 V3 L12.5 6 V10 L11 11.5 Z" fill="none" stroke="#F02828"/><path d="M0.5 11.5 H11 L12.5 10 V6" fill="none" stroke="#F02828"/><circle cx="6.5" cy="7.5" r="1.8" fill="#F02828"/></svg>
<svg class="a" style="left:929px;top:105px" width="16" height="10" viewBox="0 0 16 10"><path d="M0.5 5 L8 0.5 V3 H16 V7 H8 V9.5 Z" fill="#C4C2B4" /></svg>
<svg class="a" style="left:952px;top:105px" width="16" height="10" viewBox="0 0 16 10"><path d="M15.5 5 L8 0.5 V3 H0 V7 H8 V9.5 Z" fill="#C4C2B4"/></svg>
<svg class="a" style="left:976px;top:102px" width="14" height="16" viewBox="0 0 14 16"><path d="M0 6 L8 1 L10 0" stroke="#F02828"/><path d="M6 3 V14 L8.5 11.5 L10.5 15.5 L12 14.8 L10 11 H13 Z" fill="#fff" stroke="#222"/></svg>
<svg class="a" style="left:998px;top:102px" width="16" height="16" viewBox="0 0 16 16"><rect x="1" y="1" width="14.5" height="13.5" fill="none" stroke="#2828E8" stroke-width="1.2"/><path d="M0 0 V2 M16 14 V16" stroke="#222"/><circle cx="5" cy="5" r="2" fill="none" stroke="#F02828"/><path d="M7 11.5 H12 V7 Z" fill="none" stroke="#F02828" stroke-width="1.1"/></svg>
<svg class="a" style="left:1021px;top:102px" width="16" height="16" viewBox="0 0 16 16"><path d="M1 3 L3 1 H12 L13 4 L15 8 L14 13 L10 15 H4 L3 12 L1 8 Z" fill="none" stroke="#2828E8" stroke-width="1.3"/><circle cx="5" cy="5.5" r="2" fill="none" stroke="#F02828"/><path d="M7 12 H12 V7.5 Z" fill="none" stroke="#F02828" stroke-width="1.1"/></svg>
<svg class="a" style="left:1044px;top:102px" width="16" height="15" viewBox="0 0 16 15"><rect x="0.5" y="0.5" width="15" height="13.5" fill="none" stroke="#D5D2C2" stroke-width="1.2"/><path d="M3 3 V8 L7 4 Z" fill="none" stroke="#C9C6B6"/><circle cx="11" cy="9.5" r="2" fill="none" stroke="#C9C6B6"/></svg>
<svg class="a" style="left:1067px;top:102px" width="15" height="15" viewBox="0 0 15 15"><rect x="1" y="1" width="13" height="13" fill="none" stroke="#A7A494" stroke-width="2"/><path d="M1.5 1.5 L13.5 13.5 M13.5 1.5 L1.5 13.5" stroke="#A7A494" stroke-width="1.6"/></svg>
<svg class="a" style="left:1100px;top:102px" width="16" height="15" viewBox="0 0 16 15"><rect x="0.5" y="0.5" width="15" height="14" fill="none" stroke="#A7A494" stroke-width="1.2"/><path d="M8 2 V13 M2 7.5 H14" stroke="#A7A494"/><path d="M5 4 L8 1 L11 4 M5 11 L8 14 L11 11 M4 5 L1 7.5 L4 10 M12 5 L15 7.5 L12 10" fill="none" stroke="#A7A494" stroke-width="1.3"/></svg>
<svg class="a" style="left:1123px;top:103px" width="15" height="14" viewBox="0 0 15 14"><path d="M3 8 A5.5 5.5 0 1 0 5 3.5" fill="none" stroke="#C9C6B6" stroke-width="1.3"/><path d="M0.5 7 L3 10 L5.5 7" fill="none" stroke="#C9C6B6" stroke-width="1.3"/></svg>
<svg class="a" style="left:1147px;top:102px" width="14" height="14" viewBox="0 0 14 14"><path d="M0.5 13.5 V5 H5 L10 13.5 Z" fill="none" stroke="#C9C6B6"/><path d="M0.5 5 V0.5 H9 L13.5 5 V13.5 H10" fill="none" stroke="#C9C6B6" stroke-dasharray="1.5 1"/></svg>
<svg class="a" style="left:1169px;top:101px" width="15" height="16" viewBox="0 0 15 16"><path d="M6 2 L0.5 12 H6 Z M9 2 L14.5 12 H9 Z" fill="none" stroke="#C9C6B6"/><path d="M7.5 0 V16" stroke="#C9C6B6" stroke-dasharray="1 1"/></svg>
<svg class="a" style="left:1192px;top:102px" width="16" height="15" viewBox="0 0 16 15"><path d="M1 3 Q4 1 7 4 M6 1 L7 4 L4 5 M10 4 V13 H15 Z M1 12 H5 M3 10 V14" fill="none" stroke="#C9C6B6"/></svg>
<svg class="a" style="left:1216px;top:101px" width="14" height="16" viewBox="0 0 14 16"><path d="M0.5 0.5 H7 L9 2.5 V11 H0.5 Z" fill="#DCEEE8" stroke="#7AAAB8"/><path d="M4.5 4.5 H11.5 L13.5 6.5 V15.5 H4.5 Z" fill="#DCEEE8" stroke="#8A9AA0"/><path d="M6 10 H12" stroke="#fff"/><path d="M0.5 0.5 V11" stroke="#3AA0B0"/></svg>
<svg class="a" style="left:11px;top:953px" width="16" height="16" viewBox="0 0 16 16"><path d="M1 15 L10 6" stroke="#E8E8E8" stroke-width="2"/><path d="M1 15 L10 6" stroke="#A0A0A0" stroke-width="0.6"/><path d="M3 1 L14 13" stroke="#5AAAE0" stroke-width="2.6"/><path d="M3 1 L8 6" stroke="#C8C8C8" stroke-width="2"/><path d="M11 1 Q9 3 11 5 Q13 6 15 4" fill="none" stroke="#C8C8C8" stroke-width="1.8"/></svg>
<svg class="a" style="left:30px;top:959px" width="6" height="4" viewBox="0 0 6 4"><path d="M0 0 H6 L3 3.5 Z" fill="#000"/></svg>
<svg class="a" style="left:44px;top:954px" width="14" height="15" viewBox="0 0 14 15"><path d="M2.5 12 V7 A4.5 4.5 0 0 1 11.5 7 V12" fill="none" stroke="#D02020" stroke-width="3"/><path d="M1 14 Q7 16 13 14" fill="none" stroke="#C0C0C0"/></svg>
<svg class="a" style="left:66px;top:953px" width="17" height="17" viewBox="0 0 17 17"><path d="M0 4 H16 M12 0 V16" stroke="#333" stroke-width="1.2"/><path d="M2 6.5 H9" stroke="#333" stroke-dasharray="1 1"/></svg>
<svg class="a" style="left:851px;top:955px" width="14" height="14" viewBox="0 0 14 14"><path d="M0.5 7 H9.5 V12 L8 13.5 H2 L0.5 12 Z" fill="#C8C8C8" stroke="#333"/><path d="M6 7 V3 A3 3 0 0 1 12 3 V6" fill="none" stroke="#333" stroke-width="1.4"/><path d="M4.5 9 V11" stroke="#333"/></svg>
<svg class="a" style="left:0;top:0" width="1280" height="998" shape-rendering="crispEdges">
<path fill="#000" d="M303 290h869v1h-869zM303 290h1v508h-1zM303 391h869v1h-869zM303 492h869v1h-869zM303 594h869v1h-869zM303 695h869v1h-869zM303 797h869v1h-869zM472 268h1v530h-1zM489 268h1v530h-1zM506 268h1v530h-1zM522 269h1v529h-1zM539 269h1v529h-1zM556 270h1v528h-1zM573 271h1v527h-1zM590 273h1v525h-1zM607 275h1v523h-1zM624 277h1v521h-1zM641 278h1v520h-1zM658 278h1v520h-1zM675 279h1v519h-1zM691 280h1v518h-1zM708 281h1v517h-1zM725 282h1v516h-1zM742 282h1v516h-1zM759 282h1v516h-1zM776 282h1v516h-1zM793 282h1v516h-1zM810 282h1v516h-1zM827 283h1v515h-1zM844 284h1v514h-1zM860 286h1v512h-1zM877 285h1v513h-1zM894 284h1v514h-1zM911 283h1v515h-1zM928 283h1v515h-1zM945 281h1v517h-1zM962 280h1v518h-1zM979 279h1v519h-1zM996 278h1v520h-1zM1013 278h1v520h-1zM1029 277h1v521h-1zM1046 275h1v523h-1zM1063 274h1v524h-1zM1080 273h1v525h-1zM1097 272h1v526h-1zM1114 270h1v528h-1zM1131 269h1v529h-1zM1148 269h1v529h-1zM1165 268h1v530h-1zM1171 268h1v530h-1zM595 274h8v1h-8zM1055 274h17v1h-17zM819 283h17v1h-17zM903 283h30v1h-30zM472 268h42v1h-42zM1157 268h15v1h-15zM620 277h13v1h-13zM1021 277h13v1h-13zM514 269h34v1h-34zM1123 269h34v1h-34zM612 276h8v1h-8zM1034 276h8v1h-8zM667 279h16v1h-16zM971 279h17v1h-17zM700 281h17v1h-17zM941 281h13v1h-13zM717 282h102v1h-102zM933 282h8v1h-8zM565 271h13v1h-13zM1102 271h8v1h-8zM683 280h17v1h-17zM954 280h17v1h-17zM836 284h12v1h-12zM886 284h17v1h-17zM633 278h34v1h-34zM988 278h33v1h-33zM548 270h17v1h-17zM1110 270h13v1h-13zM603 275h9v1h-9zM1042 275h13v1h-13zM848 285h8v1h-8zM869 285h17v1h-17zM578 272h8v1h-8zM1089 272h13v1h-13zM856 286h13v1h-13zM586 273h9v1h-9zM1072 273h17v1h-17z"/>
</svg>
<div class="t" style="left:316px;top:330.5px;font:italic 13.1px 'Liberation Serif';transform-origin:0 0;transform:scaleX(0.965)">Разстояние</div>
<div class="t" style="left:316px;top:432.5px;font:italic 13.1px 'Liberation Serif';transform-origin:0 0;transform:scaleX(0.965)">Разстояние между точки</div>
<div class="t" style="left:316px;top:533.5px;font:italic 13.1px 'Liberation Serif';transform-origin:0 0;transform:scaleX(0.965)">Височина</div>
<div class="t" style="left:316px;top:634.5px;font:italic 13.1px 'Liberation Serif';transform-origin:0 0;transform:scaleX(0.965)">X</div>
<div class="t" style="left:316px;top:735.5px;font:italic 13.1px 'Liberation Serif';transform-origin:0 0;transform:scaleX(0.965)">Y</div>
<div class="t" style="left:316px;top:128px;font:italic 13.1px 'Liberation Serif';transform-origin:0 0;transform:scaleX(0.95)">Базова височина : 700.00 м</div>
<div class="t" style="left:316px;top:230px;font:italic 13.1px 'Liberation Serif';transform-origin:0 0;transform:scaleX(0.95)">Мащаб по височина: 1:1.00</div>
<div class="t lb" style="left:471px;top:339.5px;"><span style="position:absolute;right:0;top:0;transform-origin:100% 0;transform:rotate(-90deg) translate(50%,-100%);font:italic 13px 'Liberation Serif';line-height:1">0.000</span></div>
<div class="t lb" style="left:471px;top:441.5px;"><span style="position:absolute;right:0;top:0;transform-origin:100% 0;transform:rotate(-90deg) translate(50%,-100%);font:italic 13px 'Liberation Serif';line-height:1">5.000</span></div>
<div class="t lb" style="left:471px;top:544.0px;"><span style="position:absolute;right:0;top:0;transform-origin:100% 0;transform:rotate(-90deg) translate(50%,-100%);font:italic 13px 'Liberation Serif';line-height:1">706.409</span></div>
<div class="t lb" style="left:471px;top:644.5px;"><span style="position:absolute;right:0;top:0;transform-origin:100% 0;transform:rotate(-90deg) translate(50%,-100%);font:italic 13px 'Liberation Serif';line-height:1">9000687.722</span></div>
<div class="t lb" style="left:471px;top:746.0px;"><span style="position:absolute;right:0;top:0;transform-origin:100% 0;transform:rotate(-90deg) translate(50%,-100%);font:italic 13px 'Liberation Serif';line-height:1">9000551.460</span></div>
<div class="t lb" style="left:488px;top:339.5px;"><span style="position:absolute;right:0;top:0;transform-origin:100% 0;transform:rotate(-90deg) translate(50%,-100%);font:italic 13px 'Liberation Serif';line-height:1">5.000</span></div>
<div class="t lb" style="left:488px;top:441.5px;"><span style="position:absolute;right:0;top:0;transform-origin:100% 0;transform:rotate(-90deg) translate(50%,-100%);font:italic 13px 'Liberation Serif';line-height:1">5.000</span></div>
<div class="t lb" style="left:488px;top:544.0px;"><span style="position:absolute;right:0;top:0;transform-origin:100% 0;transform:rotate(-90deg) translate(50%,-100%);font:italic 13px 'Liberation Serif';line-height:1">706.389</span></div>
<div class="t lb" style="left:488px;top:644.5px;"><span style="position:absolute;right:0;top:0;transform-origin:100% 0;transform:rotate(-90deg) translate(50%,-100%);font:italic 13px 'Liberation Serif';line-height:1">9000682.764</span></div>
<div class="t lb" style="left:488px;top:746.0px;"><span style="position:absolute;right:0;top:0;transform-origin:100% 0;transform:rotate(-90deg) translate(50%,-100%);font:italic 13px 'Liberation Serif';line-height:1">9000552.113</span></div>
<div class="t lb" style="left:505px;top:339.5px;"><span style="position:absolute;right:0;top:0;transform-origin:100% 0;transform:rotate(-90deg) translate(50%,-100%);font:italic 13px 'Liberation Serif';line-height:1">10.000</span></div>
<div class="t lb" style="left:505px;top:441.5px;"><span style="position:absolute;right:0;top:0;transform-origin:100% 0;transform:rotate(-90deg) translate(50%,-100%);font:italic 13px 'Liberation Serif';line-height:1">5.000</span></div>
<div class="t lb" style="left:505px;top:544.0px;"><span style="position:absolute;right:0;top:0;transform-origin:100% 0;transform:rotate(-90deg) translate(50%,-100%);font:italic 13px 'Liberation Serif';line-height:1">706.367</span></div>
<div class="t lb" style="left:505px;top:644.5px;"><span style="position:absolute;right:0;top:0;transform-origin:100% 0;transform:rotate(-90deg) translate(50%,-100%);font:italic 13px 'Liberation Serif';line-height:1">9000677.807</span></div>
<div class="t lb" style="left:505px;top:746.0px;"><span style="position:absolute;right:0;top:0;transform-origin:100% 0;transform:rotate(-90deg) translate(50%,-100%);font:italic 13px 'Liberation Serif';line-height:1">9000552.766</span></div>
<div class="t lb" style="left:521px;top:339.5px;"><span style="position:absolute;right:0;top:0;transform-origin:100% 0;transform:rotate(-90deg) translate(50%,-100%);font:italic 13px 'Liberation Serif';line-height:1">15.000</span></div>
<div class="t lb" style="left:521px;top:441.5px;"><span style="position:absolute;right:0;top:0;transform-origin:100% 0;transform:rotate(-90deg) translate(50%,-100%);font:italic 13px 'Liberation Serif';line-height:1">5.000</span></div>
<div class="t lb" style="left:521px;top:544.0px;"><span style="position:absolute;right:0;top:0;transform-origin:100% 0;transform:rotate(-90deg) translate(50%,-100%);font:italic 13px 'Liberation Serif';line-height:1">706.186</span></div>
<div class="t lb" style="left:521px;top:644.5px;"><span style="position:absolute;right:0;top:0;transform-origin:100% 0;transform:rotate(-90deg) translate(50%,-100%);font:italic 13px 'Liberation Serif';line-height:1">9000672.850</span></div>
<div class="t lb" style="left:521px;top:746.0px;"><span style="position:absolute;right:0;top:0;transform-origin:100% 0;transform:rotate(-90deg) translate(50%,-100%);font:italic 13px 'Liberation Serif';line-height:1">9000553.419</span></div>
<div class="t lb" style="left:538px;top:339.5px;"><span style="position:absolute;right:0;top:0;transform-origin:100% 0;transform:rotate(-90deg) translate(50%,-100%);font:italic 13px 'Liberation Serif';line-height:1">20.000</span></div>
<div class="t lb" style="left:538px;top:441.5px;"><span style="position:absolute;right:0;top:0;transform-origin:100% 0;transform:rotate(-90deg) translate(50%,-100%);font:italic 13px 'Liberation Serif';line-height:1">5.000</span></div>
<div class="t lb" style="left:538px;top:544.0px;"><span style="position:absolute;right:0;top:0;transform-origin:100% 0;transform:rotate(-90deg) translate(50%,-100%);font:italic 13px 'Liberation Serif';line-height:1">706.005</span></div>
<div class="t lb" style="left:538px;top:644.5px;"><span style="position:absolute;right:0;top:0;transform-origin:100% 0;transform:rotate(-90deg) translate(50%,-100%);font:italic 13px 'Liberation Serif';line-height:1">9000667.893</span></div>
<div class="t lb" style="left:538px;top:746.0px;"><span style="position:absolute;right:0;top:0;transform-origin:100% 0;transform:rotate(-90deg) translate(50%,-100%);font:italic 13px 'Liberation Serif';line-height:1">9000554.072</span></div>
<div class="t lb" style="left:555px;top:339.5px;"><span style="position:absolute;right:0;top:0;transform-origin:100% 0;transform:rotate(-90deg) translate(50%,-100%);font:italic 13px 'Liberation Serif';line-height:1">25.000</span></div>
<div class="t lb" style="left:555px;top:441.5px;"><span style="position:absolute;right:0;top:0;transform-origin:100% 0;transform:rotate(-90deg) translate(50%,-100%);font:italic 13px 'Liberation Serif';line-height:1">5.000</span></div>
<div class="t lb" style="left:555px;top:544.0px;"><span style="position:absolute;right:0;top:0;transform-origin:100% 0;transform:rotate(-90deg) translate(50%,-100%);font:italic 13px 'Liberation Serif';line-height:1">705.825</span></div>
<div class="t lb" style="left:555px;top:644.5px;"><span style="position:absolute;right:0;top:0;transform-origin:100% 0;transform:rotate(-90deg) translate(50%,-100%);font:italic 13px 'Liberation Serif';line-height:1">9000662.936</span></div>
<div class="t lb" style="left:555px;top:746.0px;"><span style="position:absolute;right:0;top:0;transform-origin:100% 0;transform:rotate(-90deg) translate(50%,-100%);font:italic 13px 'Liberation Serif';line-height:1">9000554.725</span></div>
<div class="t lb" style="left:572px;top:339.5px;"><span style="position:absolute;right:0;top:0;transform-origin:100% 0;transform:rotate(-90deg) translate(50%,-100%);font:italic 13px 'Liberation Serif';line-height:1">30.000</span></div>
<div class="t lb" style="left:572px;top:441.5px;"><span style="position:absolute;right:0;top:0;transform-origin:100% 0;transform:rotate(-90deg) translate(50%,-100%);font:italic 13px 'Liberation Serif';line-height:1">5.000</span></div>
<div class="t lb" style="left:572px;top:544.0px;"><span style="position:absolute;right:0;top:0;transform-origin:100% 0;transform:rotate(-90deg) translate(50%,-100%);font:italic 13px 'Liberation Serif';line-height:1">705.518</span></div>
<div class="t lb" style="left:572px;top:644.5px;"><span style="position:absolute;right:0;top:0;transform-origin:100% 0;transform:rotate(-90deg) translate(50%,-100%);font:italic 13px 'Liberation Serif';line-height:1">9000657.979</span></div>
<div class="t lb" style="left:572px;top:746.0px;"><span style="position:absolute;right:0;top:0;transform-origin:100% 0;transform:rotate(-90deg) translate(50%,-100%);font:italic 13px 'Liberation Serif';line-height:1">9000555.378</span></div>
<div class="t lb" style="left:589px;top:339.5px;"><span style="position:absolute;right:0;top:0;transform-origin:100% 0;transform:rotate(-90deg) translate(50%,-100%);font:italic 13px 'Liberation Serif';line-height:1">35.000</span></div>
<div class="t lb" style="left:589px;top:441.5px;"><span style="position:absolute;right:0;top:0;transform-origin:100% 0;transform:rotate(-90deg) translate(50%,-100%);font:italic 13px 'Liberation Serif';line-height:1">5.000</span></div>
<div class="t lb" style="left:589px;top:544.0px;"><span style="position:absolute;right:0;top:0;transform-origin:100% 0;transform:rotate(-90deg) translate(50%,-100%);font:italic 13px 'Liberation Serif';line-height:1">704.954</span></div>
<div class="t lb" style="left:589px;top:644.5px;"><span style="position:absolute;right:0;top:0;transform-origin:100% 0;transform:rotate(-90deg) translate(50%,-100%);font:italic 13px 'Liberation Serif';line-height:1">9000653.021</span></div>
<div class="t lb" style="left:589px;top:746.0px;"><span style="position:absolute;right:0;top:0;transform-origin:100% 0;transform:rotate(-90deg) translate(50%,-100%);font:italic 13px 'Liberation Serif';line-height:1">9000556.031</span></div>
<div class="t lb" style="left:606px;top:339.5px;"><span style="position:absolute;right:0;top:0;transform-origin:100% 0;transform:rotate(-90deg) translate(50%,-100%);font:italic 13px 'Liberation Serif';line-height:1">40.000</span></div>
<div class="t lb" style="left:606px;top:441.5px;"><span style="position:absolute;right:0;top:0;transform-origin:100% 0;transform:rotate(-90deg) translate(50%,-100%);font:italic 13px 'Liberation Serif';line-height:1">5.000</span></div>
<div class="t lb" style="left:606px;top:544.0px;"><span style="position:absolute;right:0;top:0;transform-origin:100% 0;transform:rotate(-90deg) translate(50%,-100%);font:italic 13px 'Liberation Serif';line-height:1">704.389</span></div>
<div class="t lb" style="left:606px;top:644.5px;"><span style="position:absolute;right:0;top:0;transform-origin:100% 0;transform:rotate(-90deg) translate(50%,-100%);font:italic 13px 'Liberation Serif';line-height:1">9000648.064</span></div>
<div class="t lb" style="left:606px;top:746.0px;"><span style="position:absolute;right:0;top:0;transform-origin:100% 0;transform:rotate(-90deg) translate(50%,-100%);font:italic 13px 'Liberation Serif';line-height:1">9000556.684</span></div>
<div class="t lb" style="left:623px;top:339.5px;"><span style="position:absolute;right:0;top:0;transform-origin:100% 0;transform:rotate(-90deg) translate(50%,-100%);font:italic 13px 'Liberation Serif';line-height:1">45.000</span></div>
<div class="t lb" style="left:623px;top:441.5px;"><span style="position:absolute;right:0;top:0;transform-origin:100% 0;transform:rotate(-90deg) translate(50%,-100%);font:italic 13px 'Liberation Serif';line-height:1">5.000</span></div>
<div class="t lb" style="left:623px;top:544.0px;"><span style="position:absolute;right:0;top:0;transform-origin:100% 0;transform:rotate(-90deg) translate(50%,-100%);font:italic 13px 'Liberation Serif';line-height:1">703.725</span></div>
<div class="t lb" style="left:623px;top:644.5px;"><span style="position:absolute;right:0;top:0;transform-origin:100% 0;transform:rotate(-90deg) translate(50%,-100%);font:italic 13px 'Liberation Serif';line-height:1">9000643.357</span></div>
<div class="t lb" style="left:623px;top:746.0px;"><span style="position:absolute;right:0;top:0;transform-origin:100% 0;transform:rotate(-90deg) translate(50%,-100%);font:italic 13px 'Liberation Serif';line-height:1">9000557.567</span></div>
<div class="t lb" style="left:640px;top:339.5px;"><span style="position:absolute;right:0;top:0;transform-origin:100% 0;transform:rotate(-90deg) translate(50%,-100%);font:italic 13px 'Liberation Serif';line-height:1">50.000</span></div>
<div class="t lb" style="left:640px;top:441.5px;"><span style="position:absolute;right:0;top:0;transform-origin:100% 0;transform:rotate(-90deg) translate(50%,-100%);font:italic 13px 'Liberation Serif';line-height:1">5.000</span></div>
<div class="t lb" style="left:640px;top:544.0px;"><span style="position:absolute;right:0;top:0;transform-origin:100% 0;transform:rotate(-90deg) translate(50%,-100%);font:italic 13px 'Liberation Serif';line-height:1">703.549</span></div>
<div class="t lb" style="left:640px;top:644.5px;"><span style="position:absolute;right:0;top:0;transform-origin:100% 0;transform:rotate(-90deg) translate(50%,-100%);font:italic 13px 'Liberation Serif';line-height:1">9000643.100</span></div>
<div class="t lb" style="left:640px;top:746.0px;"><span style="position:absolute;right:0;top:0;transform-origin:100% 0;transform:rotate(-90deg) translate(50%,-100%);font:italic 13px 'Liberation Serif';line-height:1">9000562.561</span></div>
<div class="t lb" style="left:657px;top:339.5px;"><span style="position:absolute;right:0;top:0;transform-origin:100% 0;transform:rotate(-90deg) translate(50%,-100%);font:italic 13px 'Liberation Serif';line-height:1">55.000</span></div>
<div class="t lb" style="left:657px;top:441.5px;"><span style="position:absolute;right:0;top:0;transform-origin:100% 0;transform:rotate(-90deg) translate(50%,-100%);font:italic 13px 'Liberation Serif';line-height:1">5.000</span></div>
<div class="t lb" style="left:657px;top:544.0px;"><span style="position:absolute;right:0;top:0;transform-origin:100% 0;transform:rotate(-90deg) translate(50%,-100%);font:italic 13px 'Liberation Serif';line-height:1">703.418</span></div>
<div class="t lb" style="left:657px;top:644.5px;"><span style="position:absolute;right:0;top:0;transform-origin:100% 0;transform:rotate(-90deg) translate(50%,-100%);font:italic 13px 'Liberation Serif';line-height:1">9000642.844</span></div>
<div class="t lb" style="left:657px;top:746.0px;"><span style="position:absolute;right:0;top:0;transform-origin:100% 0;transform:rotate(-90deg) translate(50%,-100%);font:italic 13px 'Liberation Serif';line-height:1">9000567.554</span></div>
<div class="t lb" style="left:674px;top:339.5px;"><span style="position:absolute;right:0;top:0;transform-origin:100% 0;transform:rotate(-90deg) translate(50%,-100%);font:italic 13px 'Liberation Serif';line-height:1">60.000</span></div>
<div class="t lb" style="left:674px;top:441.5px;"><span style="position:absolute;right:0;top:0;transform-origin:100% 0;transform:rotate(-90deg) translate(50%,-100%);font:italic 13px 'Liberation Serif';line-height:1">5.000</span></div>
<div class="t lb" style="left:674px;top:544.0px;"><span style="position:absolute;right:0;top:0;transform-origin:100% 0;transform:rotate(-90deg) translate(50%,-100%);font:italic 13px 'Liberation Serif';line-height:1">703.249</span></div>
<div class="t lb" style="left:674px;top:644.5px;"><span style="position:absolute;right:0;top:0;transform-origin:100% 0;transform:rotate(-90deg) translate(50%,-100%);font:italic 13px 'Liberation Serif';line-height:1">9000642.587</span></div>
<div class="t lb" style="left:674px;top:746.0px;"><span style="position:absolute;right:0;top:0;transform-origin:100% 0;transform:rotate(-90deg) translate(50%,-100%);font:italic 13px 'Liberation Serif';line-height:1">9000572.548</span></div>
<div class="t lb" style="left:690px;top:339.5px;"><span style="position:absolute;right:0;top:0;transform-origin:100% 0;transform:rotate(-90deg) translate(50%,-100%);font:italic 13px 'Liberation Serif';line-height:1">65.000</span></div>
<div class="t lb" style="left:690px;top:441.5px;"><span style="position:absolute;right:0;top:0;transform-origin:100% 0;transform:rotate(-90deg) translate(50%,-100%);font:italic 13px 'Liberation Serif';line-height:1">5.000</span></div>
<div class="t lb" style="left:690px;top:544.0px;"><span style="position:absolute;right:0;top:0;transform-origin:100% 0;transform:rotate(-90deg) translate(50%,-100%);font:italic 13px 'Liberation Serif';line-height:1">702.980</span></div>
<div class="t lb" style="left:690px;top:644.5px;"><span style="position:absolute;right:0;top:0;transform-origin:100% 0;transform:rotate(-90deg) translate(50%,-100%);font:italic 13px 'Liberation Serif';line-height:1">9000642.331</span></div>
<div class="t lb" style="left:690px;top:746.0px;"><span style="position:absolute;right:0;top:0;transform-origin:100% 0;transform:rotate(-90deg) translate(50%,-100%);font:italic 13px 'Liberation Serif';line-height:1">9000577.541</span></div>
<div class="t lb" style="left:707px;top:339.5px;"><span style="position:absolute;right:0;top:0;transform-origin:100% 0;transform:rotate(-90deg) translate(50%,-100%);font:italic 13px 'Liberation Serif';line-height:1">70.000</span></div>
<div class="t lb" style="left:707px;top:441.5px;"><span style="position:absolute;right:0;top:0;transform-origin:100% 0;transform:rotate(-90deg) translate(50%,-100%);font:italic 13px 'Liberation Serif';line-height:1">5.000</span></div>
<div class="t lb" style="left:707px;top:544.0px;"><span style="position:absolute;right:0;top:0;transform-origin:100% 0;transform:rotate(-90deg) translate(50%,-100%);font:italic 13px 'Liberation Serif';line-height:1">702.723</span></div>
<div class="t lb" style="left:707px;top:644.5px;"><span style="position:absolute;right:0;top:0;transform-origin:100% 0;transform:rotate(-90deg) translate(50%,-100%);font:italic 13px 'Liberation Serif';line-height:1">9000642.074</span></div>
<div class="t lb" style="left:707px;top:746.0px;"><span style="position:absolute;right:0;top:0;transform-origin:100% 0;transform:rotate(-90deg) translate(50%,-100%);font:italic 13px 'Liberation Serif';line-height:1">9000582.534</span></div>
<div class="t lb" style="left:724px;top:339.5px;"><span style="position:absolute;right:0;top:0;transform-origin:100% 0;transform:rotate(-90deg) translate(50%,-100%);font:italic 13px 'Liberation Serif';line-height:1">75.000</span></div>
<div class="t lb" style="left:724px;top:441.5px;"><span style="position:absolute;right:0;top:0;transform-origin:100% 0;transform:rotate(-90deg) translate(50%,-100%);font:italic 13px 'Liberation Serif';line-height:1">5.000</span></div>
<div class="t lb" style="left:724px;top:544.0px;"><span style="position:absolute;right:0;top:0;transform-origin:100% 0;transform:rotate(-90deg) translate(50%,-100%);font:italic 13px 'Liberation Serif';line-height:1">702.318</span></div>
<div class="t lb" style="left:724px;top:644.5px;"><span style="position:absolute;right:0;top:0;transform-origin:100% 0;transform:rotate(-90deg) translate(50%,-100%);font:italic 13px 'Liberation Serif';line-height:1">9000641.818</span></div>
<div class="t lb" style="left:724px;top:746.0px;"><span style="position:absolute;right:0;top:0;transform-origin:100% 0;transform:rotate(-90deg) translate(50%,-100%);font:italic 13px 'Liberation Serif';line-height:1">9000587.528</span></div>
<div class="t lb" style="left:741px;top:339.5px;"><span style="position:absolute;right:0;top:0;transform-origin:100% 0;transform:rotate(-90deg) translate(50%,-100%);font:italic 13px 'Liberation Serif';line-height:1">80.000</span></div>
<div class="t lb" style="left:741px;top:441.5px;"><span style="position:absolute;right:0;top:0;transform-origin:100% 0;transform:rotate(-90deg) translate(50%,-100%);font:italic 13px 'Liberation Serif';line-height:1">5.000</span></div>
<div class="t lb" style="left:741px;top:544.0px;"><span style="position:absolute;right:0;top:0;transform-origin:100% 0;transform:rotate(-90deg) translate(50%,-100%);font:italic 13px 'Liberation Serif';line-height:1">702.341</span></div>
<div class="t lb" style="left:741px;top:644.5px;"><span style="position:absolute;right:0;top:0;transform-origin:100% 0;transform:rotate(-90deg) translate(50%,-100%);font:italic 13px 'Liberation Serif';line-height:1">9000641.561</span></div>
<div class="t lb" style="left:741px;top:746.0px;"><span style="position:absolute;right:0;top:0;transform-origin:100% 0;transform:rotate(-90deg) translate(50%,-100%);font:italic 13px 'Liberation Serif';line-height:1">9000592.521</span></div>
<div class="t lb" style="left:758px;top:339.5px;"><span style="position:absolute;right:0;top:0;transform-origin:100% 0;transform:rotate(-90deg) translate(50%,-100%);font:italic 13px 'Liberation Serif';line-height:1">85.000</span></div>
<div class="t lb" style="left:758px;top:441.5px;"><span style="position:absolute;right:0;top:0;transform-origin:100% 0;transform:rotate(-90deg) translate(50%,-100%);font:italic 13px 'Liberation Serif';line-height:1">5.000</span></div>
<div class="t lb" style="left:758px;top:544.0px;"><span style="position:absolute;right:0;top:0;transform-origin:100% 0;transform:rotate(-90deg) translate(50%,-100%);font:italic 13px 'Liberation Serif';line-height:1">702.381</span></div>
<div class="t lb" style="left:758px;top:644.5px;"><span style="position:absolute;right:0;top:0;transform-origin:100% 0;transform:rotate(-90deg) translate(50%,-100%);font:italic 13px 'Liberation Serif';line-height:1">9000641.305</span></div>
<div class="t lb" style="left:758px;top:746.0px;"><span style="position:absolute;right:0;top:0;transform-origin:100% 0;transform:rotate(-90deg) translate(50%,-100%);font:italic 13px 'Liberation Serif';line-height:1">9000597.515</span></div>
<div class="t lb" style="left:775px;top:339.5px;"><span style="position:absolute;right:0;top:0;transform-origin:100% 0;transform:rotate(-90deg) translate(50%,-100%);font:italic 13px 'Liberation Serif';line-height:1">90.000</span></div>
<div class="t lb" style="left:775px;top:441.5px;"><span style="position:absolute;right:0;top:0;transform-origin:100% 0;transform:rotate(-90deg) translate(50%,-100%);font:italic 13px 'Liberation Serif';line-height:1">5.000</span></div>
<div class="t lb" style="left:775px;top:544.0px;"><span style="position:absolute;right:0;top:0;transform-origin:100% 0;transform:rotate(-90deg) translate(50%,-100%);font:italic 13px 'Liberation Serif';line-height:1">702.423</span></div>
<div class="t lb" style="left:775px;top:644.5px;"><span style="position:absolute;right:0;top:0;transform-origin:100% 0;transform:rotate(-90deg) translate(50%,-100%);font:italic 13px 'Liberation Serif';line-height:1">9000641.048</span></div>
<div class="t lb" style="left:775px;top:746.0px;"><span style="position:absolute;right:0;top:0;transform-origin:100% 0;transform:rotate(-90deg) translate(50%,-100%);font:italic 13px 'Liberation Serif';line-height:1">9000602.508</span></div>
<div class="t lb" style="left:792px;top:339.5px;"><span style="position:absolute;right:0;top:0;transform-origin:100% 0;transform:rotate(-90deg) translate(50%,-100%);font:italic 13px 'Liberation Serif';line-height:1">95.000</span></div>
<div class="t lb" style="left:792px;top:441.5px;"><span style="position:absolute;right:0;top:0;transform-origin:100% 0;transform:rotate(-90deg) translate(50%,-100%);font:italic 13px 'Liberation Serif';line-height:1">5.000</span></div>
<div class="t lb" style="left:792px;top:544.0px;"><span style="position:absolute;right:0;top:0;transform-origin:100% 0;transform:rotate(-90deg) translate(50%,-100%);font:italic 13px 'Liberation Serif';line-height:1">702.448</span></div>
<div class="t lb" style="left:792px;top:644.5px;"><span style="position:absolute;right:0;top:0;transform-origin:100% 0;transform:rotate(-90deg) translate(50%,-100%);font:italic 13px 'Liberation Serif';line-height:1">9000640.792</span></div>
<div class="t lb" style="left:792px;top:746.0px;"><span style="position:absolute;right:0;top:0;transform-origin:100% 0;transform:rotate(-90deg) translate(50%,-100%);font:italic 13px 'Liberation Serif';line-height:1">9000607.501</span></div>
<div class="t lb" style="left:809px;top:339.5px;"><span style="position:absolute;right:0;top:0;transform-origin:100% 0;transform:rotate(-90deg) translate(50%,-100%);font:italic 13px 'Liberation Serif';line-height:1">100.000</span></div>
<div class="t lb" style="left:809px;top:441.5px;"><span style="position:absolute;right:0;top:0;transform-origin:100% 0;transform:rotate(-90deg) translate(50%,-100%);font:italic 13px 'Liberation Serif';line-height:1">5.000</span></div>
<div class="t lb" style="left:809px;top:544.0px;"><span style="position:absolute;right:0;top:0;transform-origin:100% 0;transform:rotate(-90deg) translate(50%,-100%);font:italic 13px 'Liberation Serif';line-height:1">702.306</span></div>
<div class="t lb" style="left:809px;top:644.5px;"><span style="position:absolute;right:0;top:0;transform-origin:100% 0;transform:rotate(-90deg) translate(50%,-100%);font:italic 13px 'Liberation Serif';line-height:1">9000640.535</span></div>
<div class="t lb" style="left:809px;top:746.0px;"><span style="position:absolute;right:0;top:0;transform-origin:100% 0;transform:rotate(-90deg) translate(50%,-100%);font:italic 13px 'Liberation Serif';line-height:1">9000612.495</span></div>
<div class="t lb" style="left:826px;top:339.5px;"><span style="position:absolute;right:0;top:0;transform-origin:100% 0;transform:rotate(-90deg) translate(50%,-100%);font:italic 13px 'Liberation Serif';line-height:1">105.000</span></div>
<div class="t lb" style="left:826px;top:441.5px;"><span style="position:absolute;right:0;top:0;transform-origin:100% 0;transform:rotate(-90deg) translate(50%,-100%);font:italic 13px 'Liberation Serif';line-height:1">5.000</span></div>
<div class="t lb" style="left:826px;top:544.0px;"><span style="position:absolute;right:0;top:0;transform-origin:100% 0;transform:rotate(-90deg) translate(50%,-100%);font:italic 13px 'Liberation Serif';line-height:1">701.965</span></div>
<div class="t lb" style="left:826px;top:644.5px;"><span style="position:absolute;right:0;top:0;transform-origin:100% 0;transform:rotate(-90deg) translate(50%,-100%);font:italic 13px 'Liberation Serif';line-height:1">9000640.279</span></div>
<div class="t lb" style="left:826px;top:746.0px;"><span style="position:absolute;right:0;top:0;transform-origin:100% 0;transform:rotate(-90deg) translate(50%,-100%);font:italic 13px 'Liberation Serif';line-height:1">9000617.488</span></div>
<div class="t lb" style="left:843px;top:339.5px;"><span style="position:absolute;right:0;top:0;transform-origin:100% 0;transform:rotate(-90deg) translate(50%,-100%);font:italic 13px 'Liberation Serif';line-height:1">110.000</span></div>
<div class="t lb" style="left:843px;top:441.5px;"><span style="position:absolute;right:0;top:0;transform-origin:100% 0;transform:rotate(-90deg) translate(50%,-100%);font:italic 13px 'Liberation Serif';line-height:1">5.000</span></div>
<div class="t lb" style="left:843px;top:544.0px;"><span style="position:absolute;right:0;top:0;transform-origin:100% 0;transform:rotate(-90deg) translate(50%,-100%);font:italic 13px 'Liberation Serif';line-height:1">701.612</span></div>
<div class="t lb" style="left:843px;top:644.5px;"><span style="position:absolute;right:0;top:0;transform-origin:100% 0;transform:rotate(-90deg) translate(50%,-100%);font:italic 13px 'Liberation Serif';line-height:1">9000640.022</span></div>
<div class="t lb" style="left:843px;top:746.0px;"><span style="position:absolute;right:0;top:0;transform-origin:100% 0;transform:rotate(-90deg) translate(50%,-100%);font:italic 13px 'Liberation Serif';line-height:1">9000622.482</span></div>
<div class="t lb" style="left:859px;top:339.5px;"><span style="position:absolute;right:0;top:0;transform-origin:100% 0;transform:rotate(-90deg) translate(50%,-100%);font:italic 13px 'Liberation Serif';line-height:1">115.000</span></div>
<div class="t lb" style="left:859px;top:441.5px;"><span style="position:absolute;right:0;top:0;transform-origin:100% 0;transform:rotate(-90deg) translate(50%,-100%);font:italic 13px 'Liberation Serif';line-height:1">5.000</span></div>
<div class="t lb" style="left:859px;top:544.0px;"><span style="position:absolute;right:0;top:0;transform-origin:100% 0;transform:rotate(-90deg) translate(50%,-100%);font:italic 13px 'Liberation Serif';line-height:1">701.259</span></div>
<div class="t lb" style="left:859px;top:644.5px;"><span style="position:absolute;right:0;top:0;transform-origin:100% 0;transform:rotate(-90deg) translate(50%,-100%);font:italic 13px 'Liberation Serif';line-height:1">9000639.766</span></div>
<div class="t lb" style="left:859px;top:746.0px;"><span style="position:absolute;right:0;top:0;transform-origin:100% 0;transform:rotate(-90deg) translate(50%,-100%);font:italic 13px 'Liberation Serif';line-height:1">9000627.475</span></div>
<div class="t lb" style="left:876px;top:339.5px;"><span style="position:absolute;right:0;top:0;transform-origin:100% 0;transform:rotate(-90deg) translate(50%,-100%);font:italic 13px 'Liberation Serif';line-height:1">120.000</span></div>
<div class="t lb" style="left:876px;top:441.5px;"><span style="position:absolute;right:0;top:0;transform-origin:100% 0;transform:rotate(-90deg) translate(50%,-100%);font:italic 13px 'Liberation Serif';line-height:1">5.000</span></div>
<div class="t lb" style="left:876px;top:544.0px;"><span style="position:absolute;right:0;top:0;transform-origin:100% 0;transform:rotate(-90deg) translate(50%,-100%);font:italic 13px 'Liberation Serif';line-height:1">701.423</span></div>
<div class="t lb" style="left:876px;top:644.5px;"><span style="position:absolute;right:0;top:0;transform-origin:100% 0;transform:rotate(-90deg) translate(50%,-100%);font:italic 13px 'Liberation Serif';line-height:1">9000641.789</span></div>
<div class="t lb" style="left:876px;top:746.0px;"><span style="position:absolute;right:0;top:0;transform-origin:100% 0;transform:rotate(-90deg) translate(50%,-100%);font:italic 13px 'Liberation Serif';line-height:1">9000625.207</span></div>
<div class="t lb" style="left:893px;top:339.5px;"><span style="position:absolute;right:0;top:0;transform-origin:100% 0;transform:rotate(-90deg) translate(50%,-100%);font:italic 13px 'Liberation Serif';line-height:1">125.000</span></div>
<div class="t lb" style="left:893px;top:441.5px;"><span style="position:absolute;right:0;top:0;transform-origin:100% 0;transform:rotate(-90deg) translate(50%,-100%);font:italic 13px 'Liberation Serif';line-height:1">5.000</span></div>
<div class="t lb" style="left:893px;top:544.0px;"><span style="position:absolute;right:0;top:0;transform-origin:100% 0;transform:rotate(-90deg) translate(50%,-100%);font:italic 13px 'Liberation Serif';line-height:1">701.728</span></div>
<div class="t lb" style="left:893px;top:644.5px;"><span style="position:absolute;right:0;top:0;transform-origin:100% 0;transform:rotate(-90deg) translate(50%,-100%);font:italic 13px 'Liberation Serif';line-height:1">9000644.432</span></div>
<div class="t lb" style="left:893px;top:746.0px;"><span style="position:absolute;right:0;top:0;transform-origin:100% 0;transform:rotate(-90deg) translate(50%,-100%);font:italic 13px 'Liberation Serif';line-height:1">9000620.963</span></div>
<div class="t lb" style="left:910px;top:339.5px;"><span style="position:absolute;right:0;top:0;transform-origin:100% 0;transform:rotate(-90deg) translate(50%,-100%);font:italic 13px 'Liberation Serif';line-height:1">130.000</span></div>
<div class="t lb" style="left:910px;top:441.5px;"><span style="position:absolute;right:0;top:0;transform-origin:100% 0;transform:rotate(-90deg) translate(50%,-100%);font:italic 13px 'Liberation Serif';line-height:1">5.000</span></div>
<div class="t lb" style="left:910px;top:544.0px;"><span style="position:absolute;right:0;top:0;transform-origin:100% 0;transform:rotate(-90deg) translate(50%,-100%);font:italic 13px 'Liberation Serif';line-height:1">701.994</span></div>
<div class="t lb" style="left:910px;top:644.5px;"><span style="position:absolute;right:0;top:0;transform-origin:100% 0;transform:rotate(-90deg) translate(50%,-100%);font:italic 13px 'Liberation Serif';line-height:1">9000647.076</span></div>
<div class="t lb" style="left:910px;top:746.0px;"><span style="position:absolute;right:0;top:0;transform-origin:100% 0;transform:rotate(-90deg) translate(50%,-100%);font:italic 13px 'Liberation Serif';line-height:1">9000616.719</span></div>
<div class="t lb" style="left:927px;top:339.5px;"><span style="position:absolute;right:0;top:0;transform-origin:100% 0;transform:rotate(-90deg) translate(50%,-100%);font:italic 13px 'Liberation Serif';line-height:1">135.000</span></div>
<div class="t lb" style="left:927px;top:441.5px;"><span style="position:absolute;right:0;top:0;transform-origin:100% 0;transform:rotate(-90deg) translate(50%,-100%);font:italic 13px 'Liberation Serif';line-height:1">5.000</span></div>
<div class="t lb" style="left:927px;top:544.0px;"><span style="position:absolute;right:0;top:0;transform-origin:100% 0;transform:rotate(-90deg) translate(50%,-100%);font:italic 13px 'Liberation Serif';line-height:1">702.138</span></div>
<div class="t lb" style="left:927px;top:644.5px;"><span style="position:absolute;right:0;top:0;transform-origin:100% 0;transform:rotate(-90deg) translate(50%,-100%);font:italic 13px 'Liberation Serif';line-height:1">9000649.719</span></div>
<div class="t lb" style="left:927px;top:746.0px;"><span style="position:absolute;right:0;top:0;transform-origin:100% 0;transform:rotate(-90deg) translate(50%,-100%);font:italic 13px 'Liberation Serif';line-height:1">9000612.475</span></div>
<div class="t lb" style="left:944px;top:339.5px;"><span style="position:absolute;right:0;top:0;transform-origin:100% 0;transform:rotate(-90deg) translate(50%,-100%);font:italic 13px 'Liberation Serif';line-height:1">140.000</span></div>
<div class="t lb" style="left:944px;top:441.5px;"><span style="position:absolute;right:0;top:0;transform-origin:100% 0;transform:rotate(-90deg) translate(50%,-100%);font:italic 13px 'Liberation Serif';line-height:1">5.000</span></div>
<div class="t lb" style="left:944px;top:544.0px;"><span style="position:absolute;right:0;top:0;transform-origin:100% 0;transform:rotate(-90deg) translate(50%,-100%);font:italic 13px 'Liberation Serif';line-height:1">702.490</span></div>
<div class="t lb" style="left:944px;top:644.5px;"><span style="position:absolute;right:0;top:0;transform-origin:100% 0;transform:rotate(-90deg) translate(50%,-100%);font:italic 13px 'Liberation Serif';line-height:1">9000652.362</span></div>
<div class="t lb" style="left:944px;top:746.0px;"><span style="position:absolute;right:0;top:0;transform-origin:100% 0;transform:rotate(-90deg) translate(50%,-100%);font:italic 13px 'Liberation Serif';line-height:1">9000608.231</span></div>
<div class="t lb" style="left:961px;top:339.5px;"><span style="position:absolute;right:0;top:0;transform-origin:100% 0;transform:rotate(-90deg) translate(50%,-100%);font:italic 13px 'Liberation Serif';line-height:1">145.000</span></div>
<div class="t lb" style="left:961px;top:441.5px;"><span style="position:absolute;right:0;top:0;transform-origin:100% 0;transform:rotate(-90deg) translate(50%,-100%);font:italic 13px 'Liberation Serif';line-height:1">5.000</span></div>
<div class="t lb" style="left:961px;top:544.0px;"><span style="position:absolute;right:0;top:0;transform-origin:100% 0;transform:rotate(-90deg) translate(50%,-100%);font:italic 13px 'Liberation Serif';line-height:1">703.008</span></div>
<div class="t lb" style="left:961px;top:644.5px;"><span style="position:absolute;right:0;top:0;transform-origin:100% 0;transform:rotate(-90deg) translate(50%,-100%);font:italic 13px 'Liberation Serif';line-height:1">9000655.006</span></div>
<div class="t lb" style="left:961px;top:746.0px;"><span style="position:absolute;right:0;top:0;transform-origin:100% 0;transform:rotate(-90deg) translate(50%,-100%);font:italic 13px 'Liberation Serif';line-height:1">9000603.987</span></div>
<div class="t lb" style="left:978px;top:339.5px;"><span style="position:absolute;right:0;top:0;transform-origin:100% 0;transform:rotate(-90deg) translate(50%,-100%);font:italic 13px 'Liberation Serif';line-height:1">150.000</span></div>
<div class="t lb" style="left:978px;top:441.5px;"><span style="position:absolute;right:0;top:0;transform-origin:100% 0;transform:rotate(-90deg) translate(50%,-100%);font:italic 13px 'Liberation Serif';line-height:1">5.000</span></div>
<div class="t lb" style="left:978px;top:544.0px;"><span style="position:absolute;right:0;top:0;transform-origin:100% 0;transform:rotate(-90deg) translate(50%,-100%);font:italic 13px 'Liberation Serif';line-height:1">703.311</span></div>
<div class="t lb" style="left:978px;top:644.5px;"><span style="position:absolute;right:0;top:0;transform-origin:100% 0;transform:rotate(-90deg) translate(50%,-100%);font:italic 13px 'Liberation Serif';line-height:1">9000657.649</span></div>
<div class="t lb" style="left:978px;top:746.0px;"><span style="position:absolute;right:0;top:0;transform-origin:100% 0;transform:rotate(-90deg) translate(50%,-100%);font:italic 13px 'Liberation Serif';line-height:1">9000599.742</span></div>
<div class="t lb" style="left:995px;top:339.5px;"><span style="position:absolute;right:0;top:0;transform-origin:100% 0;transform:rotate(-90deg) translate(50%,-100%);font:italic 13px 'Liberation Serif';line-height:1">155.000</span></div>
<div class="t lb" style="left:995px;top:441.5px;"><span style="position:absolute;right:0;top:0;transform-origin:100% 0;transform:rotate(-90deg) translate(50%,-100%);font:italic 13px 'Liberation Serif';line-height:1">5.000</span></div>
<div class="t lb" style="left:995px;top:544.0px;"><span style="position:absolute;right:0;top:0;transform-origin:100% 0;transform:rotate(-90deg) translate(50%,-100%);font:italic 13px 'Liberation Serif';line-height:1">703.430</span></div>
<div class="t lb" style="left:995px;top:644.5px;"><span style="position:absolute;right:0;top:0;transform-origin:100% 0;transform:rotate(-90deg) translate(50%,-100%);font:italic 13px 'Liberation Serif';line-height:1">9000660.293</span></div>
<div class="t lb" style="left:995px;top:746.0px;"><span style="position:absolute;right:0;top:0;transform-origin:100% 0;transform:rotate(-90deg) translate(50%,-100%);font:italic 13px 'Liberation Serif';line-height:1">9000595.498</span></div>
<div class="t lb" style="left:1012px;top:339.5px;"><span style="position:absolute;right:0;top:0;transform-origin:100% 0;transform:rotate(-90deg) translate(50%,-100%);font:italic 13px 'Liberation Serif';line-height:1">160.000</span></div>
<div class="t lb" style="left:1012px;top:441.5px;"><span style="position:absolute;right:0;top:0;transform-origin:100% 0;transform:rotate(-90deg) translate(50%,-100%);font:italic 13px 'Liberation Serif';line-height:1">5.000</span></div>
<div class="t lb" style="left:1012px;top:544.0px;"><span style="position:absolute;right:0;top:0;transform-origin:100% 0;transform:rotate(-90deg) translate(50%,-100%);font:italic 13px 'Liberation Serif';line-height:1">703.518</span></div>
<div class="t lb" style="left:1012px;top:644.5px;"><span style="position:absolute;right:0;top:0;transform-origin:100% 0;transform:rotate(-90deg) translate(50%,-100%);font:italic 13px 'Liberation Serif';line-height:1">9000662.936</span></div>
<div class="t lb" style="left:1012px;top:746.0px;"><span style="position:absolute;right:0;top:0;transform-origin:100% 0;transform:rotate(-90deg) translate(50%,-100%);font:italic 13px 'Liberation Serif';line-height:1">9000591.254</span></div>
<div class="t lb" style="left:1028px;top:339.5px;"><span style="position:absolute;right:0;top:0;transform-origin:100% 0;transform:rotate(-90deg) translate(50%,-100%);font:italic 13px 'Liberation Serif';line-height:1">165.000</span></div>
<div class="t lb" style="left:1028px;top:441.5px;"><span style="position:absolute;right:0;top:0;transform-origin:100% 0;transform:rotate(-90deg) translate(50%,-100%);font:italic 13px 'Liberation Serif';line-height:1">5.000</span></div>
<div class="t lb" style="left:1028px;top:544.0px;"><span style="position:absolute;right:0;top:0;transform-origin:100% 0;transform:rotate(-90deg) translate(50%,-100%);font:italic 13px 'Liberation Serif';line-height:1">703.901</span></div>
<div class="t lb" style="left:1028px;top:644.5px;"><span style="position:absolute;right:0;top:0;transform-origin:100% 0;transform:rotate(-90deg) translate(50%,-100%);font:italic 13px 'Liberation Serif';line-height:1">9000665.579</span></div>
<div class="t lb" style="left:1028px;top:746.0px;"><span style="position:absolute;right:0;top:0;transform-origin:100% 0;transform:rotate(-90deg) translate(50%,-100%);font:italic 13px 'Liberation Serif';line-height:1">9000587.010</span></div>
<div class="t lb" style="left:1045px;top:339.5px;"><span style="position:absolute;right:0;top:0;transform-origin:100% 0;transform:rotate(-90deg) translate(50%,-100%);font:italic 13px 'Liberation Serif';line-height:1">170.000</span></div>
<div class="t lb" style="left:1045px;top:441.5px;"><span style="position:absolute;right:0;top:0;transform-origin:100% 0;transform:rotate(-90deg) translate(50%,-100%);font:italic 13px 'Liberation Serif';line-height:1">5.000</span></div>
<div class="t lb" style="left:1045px;top:544.0px;"><span style="position:absolute;right:0;top:0;transform-origin:100% 0;transform:rotate(-90deg) translate(50%,-100%);font:italic 13px 'Liberation Serif';line-height:1">704.267</span></div>
<div class="t lb" style="left:1045px;top:644.5px;"><span style="position:absolute;right:0;top:0;transform-origin:100% 0;transform:rotate(-90deg) translate(50%,-100%);font:italic 13px 'Liberation Serif';line-height:1">9000668.223</span></div>
<div class="t lb" style="left:1045px;top:746.0px;"><span style="position:absolute;right:0;top:0;transform-origin:100% 0;transform:rotate(-90deg) translate(50%,-100%);font:italic 13px 'Liberation Serif';line-height:1">9000582.766</span></div>
<div class="t lb" style="left:1062px;top:339.5px;"><span style="position:absolute;right:0;top:0;transform-origin:100% 0;transform:rotate(-90deg) translate(50%,-100%);font:italic 13px 'Liberation Serif';line-height:1">175.000</span></div>
<div class="t lb" style="left:1062px;top:441.5px;"><span style="position:absolute;right:0;top:0;transform-origin:100% 0;transform:rotate(-90deg) translate(50%,-100%);font:italic 13px 'Liberation Serif';line-height:1">5.000</span></div>
<div class="t lb" style="left:1062px;top:544.0px;"><span style="position:absolute;right:0;top:0;transform-origin:100% 0;transform:rotate(-90deg) translate(50%,-100%);font:italic 13px 'Liberation Serif';line-height:1">704.632</span></div>
<div class="t lb" style="left:1062px;top:644.5px;"><span style="position:absolute;right:0;top:0;transform-origin:100% 0;transform:rotate(-90deg) translate(50%,-100%);font:italic 13px 'Liberation Serif';line-height:1">9000670.866</span></div>
<div class="t lb" style="left:1062px;top:746.0px;"><span style="position:absolute;right:0;top:0;transform-origin:100% 0;transform:rotate(-90deg) translate(50%,-100%);font:italic 13px 'Liberation Serif';line-height:1">9000578.522</span></div>
<div class="t lb" style="left:1079px;top:339.5px;"><span style="position:absolute;right:0;top:0;transform-origin:100% 0;transform:rotate(-90deg) translate(50%,-100%);font:italic 13px 'Liberation Serif';line-height:1">180.000</span></div>
<div class="t lb" style="left:1079px;top:441.5px;"><span style="position:absolute;right:0;top:0;transform-origin:100% 0;transform:rotate(-90deg) translate(50%,-100%);font:italic 13px 'Liberation Serif';line-height:1">5.000</span></div>
<div class="t lb" style="left:1079px;top:544.0px;"><span style="position:absolute;right:0;top:0;transform-origin:100% 0;transform:rotate(-90deg) translate(50%,-100%);font:italic 13px 'Liberation Serif';line-height:1">704.998</span></div>
<div class="t lb" style="left:1079px;top:644.5px;"><span style="position:absolute;right:0;top:0;transform-origin:100% 0;transform:rotate(-90deg) translate(50%,-100%);font:italic 13px 'Liberation Serif';line-height:1">9000673.510</span></div>
<div class="t lb" style="left:1079px;top:746.0px;"><span style="position:absolute;right:0;top:0;transform-origin:100% 0;transform:rotate(-90deg) translate(50%,-100%);font:italic 13px 'Liberation Serif';line-height:1">9000574.278</span></div>
<div class="t lb" style="left:1096px;top:339.5px;"><span style="position:absolute;right:0;top:0;transform-origin:100% 0;transform:rotate(-90deg) translate(50%,-100%);font:italic 13px 'Liberation Serif';line-height:1">185.000</span></div>
<div class="t lb" style="left:1096px;top:441.5px;"><span style="position:absolute;right:0;top:0;transform-origin:100% 0;transform:rotate(-90deg) translate(50%,-100%);font:italic 13px 'Liberation Serif';line-height:1">5.000</span></div>
<div class="t lb" style="left:1096px;top:544.0px;"><span style="position:absolute;right:0;top:0;transform-origin:100% 0;transform:rotate(-90deg) translate(50%,-100%);font:italic 13px 'Liberation Serif';line-height:1">705.366</span></div>
<div class="t lb" style="left:1096px;top:644.5px;"><span style="position:absolute;right:0;top:0;transform-origin:100% 0;transform:rotate(-90deg) translate(50%,-100%);font:italic 13px 'Liberation Serif';line-height:1">9000676.153</span></div>
<div class="t lb" style="left:1096px;top:746.0px;"><span style="position:absolute;right:0;top:0;transform-origin:100% 0;transform:rotate(-90deg) translate(50%,-100%);font:italic 13px 'Liberation Serif';line-height:1">9000570.034</span></div>
<div class="t lb" style="left:1113px;top:339.5px;"><span style="position:absolute;right:0;top:0;transform-origin:100% 0;transform:rotate(-90deg) translate(50%,-100%);font:italic 13px 'Liberation Serif';line-height:1">190.000</span></div>
<div class="t lb" style="left:1113px;top:441.5px;"><span style="position:absolute;right:0;top:0;transform-origin:100% 0;transform:rotate(-90deg) translate(50%,-100%);font:italic 13px 'Liberation Serif';line-height:1">5.000</span></div>
<div class="t lb" style="left:1113px;top:544.0px;"><span style="position:absolute;right:0;top:0;transform-origin:100% 0;transform:rotate(-90deg) translate(50%,-100%);font:italic 13px 'Liberation Serif';line-height:1">705.735</span></div>
<div class="t lb" style="left:1113px;top:644.5px;"><span style="position:absolute;right:0;top:0;transform-origin:100% 0;transform:rotate(-90deg) translate(50%,-100%);font:italic 13px 'Liberation Serif';line-height:1">9000678.796</span></div>
<div class="t lb" style="left:1113px;top:746.0px;"><span style="position:absolute;right:0;top:0;transform-origin:100% 0;transform:rotate(-90deg) translate(50%,-100%);font:italic 13px 'Liberation Serif';line-height:1">9000565.790</span></div>
<div class="t lb" style="left:1130px;top:339.5px;"><span style="position:absolute;right:0;top:0;transform-origin:100% 0;transform:rotate(-90deg) translate(50%,-100%);font:italic 13px 'Liberation Serif';line-height:1">195.000</span></div>
<div class="t lb" style="left:1130px;top:441.5px;"><span style="position:absolute;right:0;top:0;transform-origin:100% 0;transform:rotate(-90deg) translate(50%,-100%);font:italic 13px 'Liberation Serif';line-height:1">5.000</span></div>
<div class="t lb" style="left:1130px;top:544.0px;"><span style="position:absolute;right:0;top:0;transform-origin:100% 0;transform:rotate(-90deg) translate(50%,-100%);font:italic 13px 'Liberation Serif';line-height:1">706.105</span></div>
<div class="t lb" style="left:1130px;top:644.5px;"><span style="position:absolute;right:0;top:0;transform-origin:100% 0;transform:rotate(-90deg) translate(50%,-100%);font:italic 13px 'Liberation Serif';line-height:1">9000681.440</span></div>
<div class="t lb" style="left:1130px;top:746.0px;"><span style="position:absolute;right:0;top:0;transform-origin:100% 0;transform:rotate(-90deg) translate(50%,-100%);font:italic 13px 'Liberation Serif';line-height:1">9000561.546</span></div>
<div class="t lb" style="left:1147px;top:339.5px;"><span style="position:absolute;right:0;top:0;transform-origin:100% 0;transform:rotate(-90deg) translate(50%,-100%);font:italic 13px 'Liberation Serif';line-height:1">200.000</span></div>
<div class="t lb" style="left:1147px;top:441.5px;"><span style="position:absolute;right:0;top:0;transform-origin:100% 0;transform:rotate(-90deg) translate(50%,-100%);font:italic 13px 'Liberation Serif';line-height:1">5.000</span></div>
<div class="t lb" style="left:1147px;top:544.0px;"><span style="position:absolute;right:0;top:0;transform-origin:100% 0;transform:rotate(-90deg) translate(50%,-100%);font:italic 13px 'Liberation Serif';line-height:1">706.268</span></div>
<div class="t lb" style="left:1147px;top:644.5px;"><span style="position:absolute;right:0;top:0;transform-origin:100% 0;transform:rotate(-90deg) translate(50%,-100%);font:italic 13px 'Liberation Serif';line-height:1">9000684.083</span></div>
<div class="t lb" style="left:1147px;top:746.0px;"><span style="position:absolute;right:0;top:0;transform-origin:100% 0;transform:rotate(-90deg) translate(50%,-100%);font:italic 13px 'Liberation Serif';line-height:1">9000557.301</span></div>
<div class="t lb" style="left:1164px;top:339.5px;"><span style="position:absolute;right:0;top:0;transform-origin:100% 0;transform:rotate(-90deg) translate(50%,-100%);font:italic 13px 'Liberation Serif';line-height:1">205.000</span></div>
<div class="t lb" style="left:1164px;top:441.5px;"><span style="position:absolute;right:0;top:0;transform-origin:100% 0;transform:rotate(-90deg) translate(50%,-100%);font:italic 13px 'Liberation Serif';line-height:1">5.000</span></div>
<div class="t lb" style="left:1164px;top:544.0px;"><span style="position:absolute;right:0;top:0;transform-origin:100% 0;transform:rotate(-90deg) translate(50%,-100%);font:italic 13px 'Liberation Serif';line-height:1">706.370</span></div>
<div class="t lb" style="left:1164px;top:644.5px;"><span style="position:absolute;right:0;top:0;transform-origin:100% 0;transform:rotate(-90deg) translate(50%,-100%);font:italic 13px 'Liberation Serif';line-height:1">9000686.727</span></div>
<div class="t lb" style="left:1164px;top:746.0px;"><span style="position:absolute;right:0;top:0;transform-origin:100% 0;transform:rotate(-90deg) translate(50%,-100%);font:italic 13px 'Liberation Serif';line-height:1">9000553.057</span></div>
<div class="t lb" style="left:1170px;top:339.5px;"><span style="position:absolute;right:0;top:0;transform-origin:100% 0;transform:rotate(-90deg) translate(50%,-100%);font:italic 13px 'Liberation Serif';line-height:1">206.833</span></div>
<div class="t lb" style="left:1170px;top:441.5px;"><span style="position:absolute;right:0;top:0;transform-origin:100% 0;transform:rotate(-90deg) translate(50%,-100%);font:italic 13px 'Liberation Serif';line-height:1">1.939</span></div>
<div class="t lb" style="left:1170px;top:544.0px;"><span style="position:absolute;right:0;top:0;transform-origin:100% 0;transform:rotate(-90deg) translate(50%,-100%);font:italic 13px 'Liberation Serif';line-height:1">706.409</span></div>
<div class="t lb" style="left:1170px;top:644.5px;"><span style="position:absolute;right:0;top:0;transform-origin:100% 0;transform:rotate(-90deg) translate(50%,-100%);font:italic 13px 'Liberation Serif';line-height:1">9000687.722</span></div>
<div class="t lb" style="left:1170px;top:746.0px;"><span style="position:absolute;right:0;top:0;transform-origin:100% 0;transform:rotate(-90deg) translate(50%,-100%);font:italic 13px 'Liberation Serif';line-height:1">9000551.460</span></div>
</body></html>
